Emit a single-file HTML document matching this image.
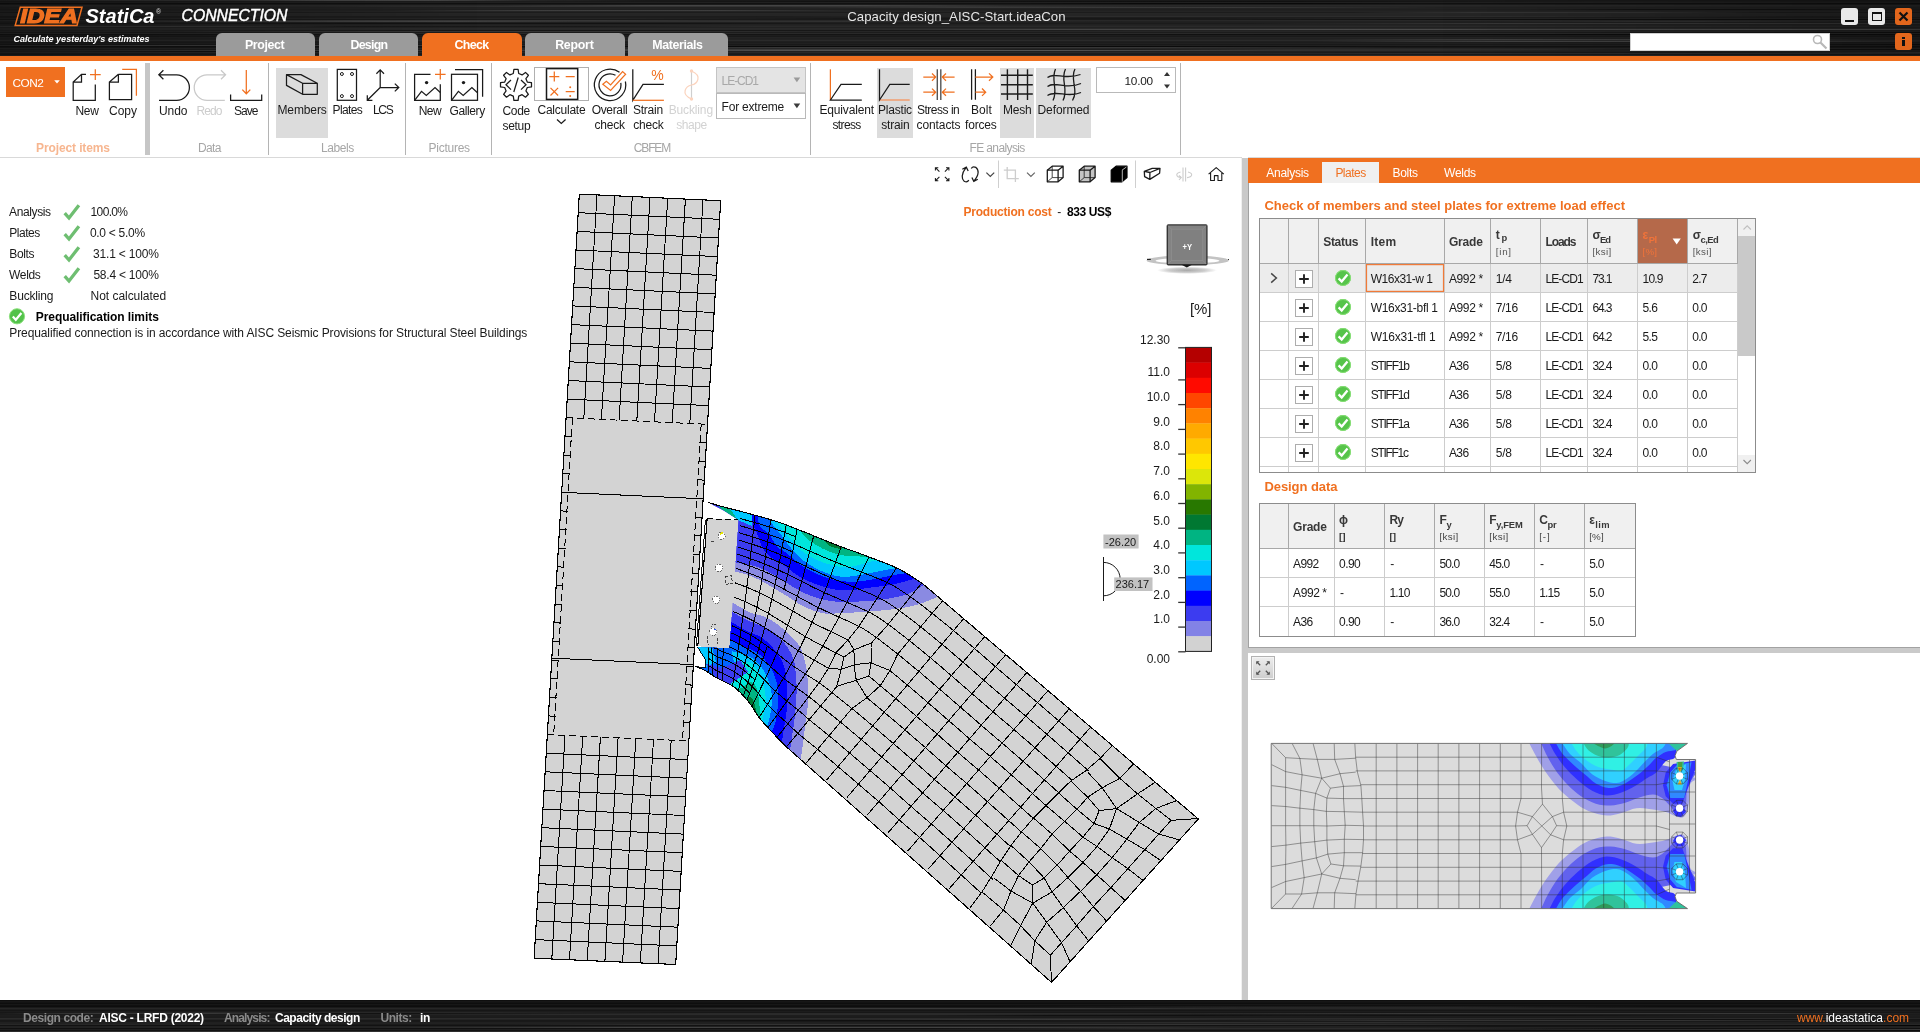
<!DOCTYPE html>
<html lang="en"><head><meta charset="utf-8"><title>IDEA StatiCa Connection</title>
<style>
html,body{margin:0;padding:0;}
body{width:1920px;height:1032px;overflow:hidden;background:#fff;position:relative;font-family:"Liberation Sans",sans-serif;}
.t{position:absolute;white-space:pre;line-height:20px;}
.b{position:absolute;box-sizing:border-box;}
svg{position:absolute;overflow:visible;}
</style></head>
<body>
<div id="app" style="position:absolute;left:0;top:0;width:1920px;height:1032px;will-change:transform;">
<div class="b" style="left:0;top:0;width:1920px;height:56px;background:linear-gradient(180deg,rgb(25,25,25) 0px,rgb(25,25,25) 1px,rgb(28,28,28) 1px,rgb(28,28,28) 2px,rgb(32,32,32) 2px,rgb(32,32,32) 3px,rgb(17,17,17) 3px,rgb(17,17,17) 4px,rgb(27,27,27) 4px,rgb(27,27,27) 5px,rgb(41,41,41) 5px,rgb(41,41,41) 6px,rgb(37,37,37) 6px,rgb(37,37,37) 7px,rgb(33,33,33) 7px,rgb(33,33,33) 8px,rgb(34,34,34) 8px,rgb(34,34,34) 9px,rgb(31,31,31) 9px,rgb(31,31,31) 10px,rgb(33,33,33) 10px,rgb(33,33,33) 11px,rgb(36,36,36) 11px,rgb(36,36,36) 12px,rgb(28,28,28) 12px,rgb(28,28,28) 13px,rgb(38,38,38) 13px,rgb(38,38,38) 14px,rgb(37,37,37) 14px,rgb(37,37,37) 15px,rgb(37,37,37) 15px,rgb(37,37,37) 16px,rgb(28,28,28) 16px,rgb(28,28,28) 17px,rgb(29,29,29) 17px,rgb(29,29,29) 18px,rgb(36,36,36) 18px,rgb(36,36,36) 19px,rgb(25,25,25) 19px,rgb(25,25,25) 20px,rgb(40,40,40) 20px,rgb(40,40,40) 21px,rgb(33,33,33) 21px,rgb(33,33,33) 22px,rgb(31,31,31) 22px,rgb(31,31,31) 23px,rgb(27,27,27) 23px,rgb(27,27,27) 24px,rgb(33,33,33) 24px,rgb(33,33,33) 25px,rgb(36,36,36) 25px,rgb(36,36,36) 26px,rgb(41,41,41) 26px,rgb(41,41,41) 27px,rgb(33,33,33) 27px,rgb(33,33,33) 28px,rgb(41,41,41) 28px,rgb(41,41,41) 29px,rgb(40,40,40) 29px,rgb(40,40,40) 30px,rgb(34,34,34) 30px,rgb(34,34,34) 31px,rgb(38,38,38) 31px,rgb(38,38,38) 32px,rgb(28,28,28) 32px,rgb(28,28,28) 33px,rgb(41,41,41) 33px,rgb(41,41,41) 34px,rgb(20,20,20) 34px,rgb(20,20,20) 35px,rgb(29,29,29) 35px,rgb(29,29,29) 36px,rgb(25,25,25) 36px,rgb(25,25,25) 37px,rgb(35,35,35) 37px,rgb(35,35,35) 38px,rgb(32,32,32) 38px,rgb(32,32,32) 39px,rgb(34,34,34) 39px,rgb(34,34,34) 40px,rgb(42,42,42) 40px,rgb(42,42,42) 41px,rgb(31,31,31) 41px,rgb(31,31,31) 42px,rgb(28,28,28) 42px,rgb(28,28,28) 43px,rgb(32,32,32) 43px,rgb(32,32,32) 44px,rgb(25,25,25) 44px,rgb(25,25,25) 45px,rgb(32,32,32) 45px,rgb(32,32,32) 46px,rgb(18,18,18) 46px,rgb(18,18,18) 47px,rgb(25,25,25) 47px,rgb(25,25,25) 48px,rgb(38,38,38) 48px,rgb(38,38,38) 49px,rgb(30,30,30) 49px,rgb(30,30,30) 50px,rgb(34,34,34) 50px,rgb(34,34,34) 51px,rgb(32,32,32) 51px,rgb(32,32,32) 52px,rgb(40,40,40) 52px,rgb(40,40,40) 53px,rgb(29,29,29) 53px,rgb(29,29,29) 54px,rgb(26,26,26) 54px,rgb(26,26,26) 55px,rgb(41,41,41) 55px,rgb(41,41,41) 56px);"></div>
<div class="b" style="left:1319px;top:39px;width:561px;height:1px;background:linear-gradient(90deg,transparent,rgba(255,255,255,0.13) 30%,rgba(255,255,255,0.13) 70%,transparent);"></div><div class="b" style="left:1135px;top:53px;width:1057px;height:1px;background:linear-gradient(90deg,transparent,rgba(255,255,255,0.07) 30%,rgba(255,255,255,0.07) 70%,transparent);"></div><div class="b" style="left:1129px;top:49px;width:555px;height:1px;background:linear-gradient(90deg,transparent,rgba(255,255,255,0.07) 30%,rgba(255,255,255,0.07) 70%,transparent);"></div><div class="b" style="left:760px;top:7px;width:680px;height:1px;background:linear-gradient(90deg,transparent,rgba(255,255,255,0.10) 30%,rgba(255,255,255,0.10) 70%,transparent);"></div><div class="b" style="left:310px;top:6px;width:887px;height:1px;background:linear-gradient(90deg,transparent,rgba(255,255,255,0.07) 30%,rgba(255,255,255,0.07) 70%,transparent);"></div><div class="b" style="left:172px;top:26px;width:586px;height:1px;background:linear-gradient(90deg,transparent,rgba(0,0,0,0.41) 30%,rgba(0,0,0,0.41) 70%,transparent);"></div><div class="b" style="left:84px;top:51px;width:373px;height:1px;background:linear-gradient(90deg,transparent,rgba(0,0,0,0.41) 30%,rgba(0,0,0,0.41) 70%,transparent);"></div><div class="b" style="left:228px;top:0px;width:305px;height:1px;background:linear-gradient(90deg,transparent,rgba(255,255,255,0.10) 30%,rgba(255,255,255,0.10) 70%,transparent);"></div><div class="b" style="left:392px;top:10px;width:470px;height:1px;background:linear-gradient(90deg,transparent,rgba(255,255,255,0.13) 30%,rgba(255,255,255,0.13) 70%,transparent);"></div><div class="b" style="left:1081px;top:34px;width:994px;height:1px;background:linear-gradient(90deg,transparent,rgba(0,0,0,0.35) 30%,rgba(0,0,0,0.35) 70%,transparent);"></div><div class="b" style="left:1779px;top:44px;width:501px;height:1px;background:linear-gradient(90deg,transparent,rgba(0,0,0,0.41) 30%,rgba(0,0,0,0.41) 70%,transparent);"></div><div class="b" style="left:139px;top:23px;width:724px;height:1px;background:linear-gradient(90deg,transparent,rgba(0,0,0,0.35) 30%,rgba(0,0,0,0.35) 70%,transparent);"></div><div class="b" style="left:1474px;top:21px;width:608px;height:1px;background:linear-gradient(90deg,transparent,rgba(255,255,255,0.07) 30%,rgba(255,255,255,0.07) 70%,transparent);"></div><div class="b" style="left:-65px;top:45px;width:646px;height:1px;background:linear-gradient(90deg,transparent,rgba(255,255,255,0.13) 30%,rgba(255,255,255,0.13) 70%,transparent);"></div><div class="b" style="left:1226px;top:19px;width:792px;height:1px;background:linear-gradient(90deg,transparent,rgba(0,0,0,0.38) 30%,rgba(0,0,0,0.38) 70%,transparent);"></div><div class="b" style="left:160px;top:30px;width:1021px;height:1px;background:linear-gradient(90deg,transparent,rgba(0,0,0,0.32) 30%,rgba(0,0,0,0.32) 70%,transparent);"></div><div class="b" style="left:532px;top:1px;width:1067px;height:1px;background:linear-gradient(90deg,transparent,rgba(0,0,0,0.41) 30%,rgba(0,0,0,0.41) 70%,transparent);"></div><div class="b" style="left:549px;top:50px;width:728px;height:1px;background:linear-gradient(90deg,transparent,rgba(255,255,255,0.16) 30%,rgba(255,255,255,0.16) 70%,transparent);"></div><div class="b" style="left:-105px;top:0px;width:763px;height:1px;background:linear-gradient(90deg,transparent,rgba(255,255,255,0.10) 30%,rgba(255,255,255,0.10) 70%,transparent);"></div><div class="b" style="left:1347px;top:12px;width:421px;height:1px;background:linear-gradient(90deg,transparent,rgba(255,255,255,0.10) 30%,rgba(255,255,255,0.10) 70%,transparent);"></div><div class="b" style="left:849px;top:29px;width:652px;height:1px;background:linear-gradient(90deg,transparent,rgba(255,255,255,0.13) 30%,rgba(255,255,255,0.13) 70%,transparent);"></div><div class="b" style="left:747px;top:16px;width:1094px;height:1px;background:linear-gradient(90deg,transparent,rgba(255,255,255,0.07) 30%,rgba(255,255,255,0.07) 70%,transparent);"></div><div class="b" style="left:1560px;top:49px;width:676px;height:1px;background:linear-gradient(90deg,transparent,rgba(0,0,0,0.38) 30%,rgba(0,0,0,0.38) 70%,transparent);"></div><div class="b" style="left:497px;top:5px;width:513px;height:1px;background:linear-gradient(90deg,transparent,rgba(255,255,255,0.13) 30%,rgba(255,255,255,0.13) 70%,transparent);"></div><div class="b" style="left:1692px;top:21px;width:582px;height:1px;background:linear-gradient(90deg,transparent,rgba(0,0,0,0.32) 30%,rgba(0,0,0,0.32) 70%,transparent);"></div><div class="b" style="left:163px;top:20px;width:613px;height:1px;background:linear-gradient(90deg,transparent,rgba(255,255,255,0.07) 30%,rgba(255,255,255,0.07) 70%,transparent);"></div><div class="b" style="left:433px;top:46px;width:1005px;height:1px;background:linear-gradient(90deg,transparent,rgba(0,0,0,0.41) 30%,rgba(0,0,0,0.41) 70%,transparent);"></div><div class="b" style="left:1030px;top:3px;width:382px;height:1px;background:linear-gradient(90deg,transparent,rgba(0,0,0,0.41) 30%,rgba(0,0,0,0.41) 70%,transparent);"></div><div class="b" style="left:504px;top:47px;width:908px;height:1px;background:linear-gradient(90deg,transparent,rgba(255,255,255,0.13) 30%,rgba(255,255,255,0.13) 70%,transparent);"></div><div class="b" style="left:-86px;top:26px;width:449px;height:1px;background:linear-gradient(90deg,transparent,rgba(255,255,255,0.07) 30%,rgba(255,255,255,0.07) 70%,transparent);"></div><div class="b" style="left:67px;top:21px;width:512px;height:1px;background:linear-gradient(90deg,transparent,rgba(255,255,255,0.10) 30%,rgba(255,255,255,0.10) 70%,transparent);"></div><div class="b" style="left:18px;top:50px;width:723px;height:1px;background:linear-gradient(90deg,transparent,rgba(255,255,255,0.10) 30%,rgba(255,255,255,0.10) 70%,transparent);"></div><div class="b" style="left:1530px;top:9px;width:360px;height:1px;background:linear-gradient(90deg,transparent,rgba(0,0,0,0.41) 30%,rgba(0,0,0,0.41) 70%,transparent);"></div><div class="b" style="left:1545px;top:29px;width:935px;height:1px;background:linear-gradient(90deg,transparent,rgba(255,255,255,0.10) 30%,rgba(255,255,255,0.10) 70%,transparent);"></div><div class="b" style="left:1210px;top:29px;width:799px;height:1px;background:linear-gradient(90deg,transparent,rgba(255,255,255,0.13) 30%,rgba(255,255,255,0.13) 70%,transparent);"></div><div class="b" style="left:626px;top:18px;width:781px;height:1px;background:linear-gradient(90deg,transparent,rgba(0,0,0,0.35) 30%,rgba(0,0,0,0.35) 70%,transparent);"></div><div class="b" style="left:1765px;top:52px;width:844px;height:1px;background:linear-gradient(90deg,transparent,rgba(255,255,255,0.10) 30%,rgba(255,255,255,0.10) 70%,transparent);"></div><div class="b" style="left:168px;top:31px;width:646px;height:1px;background:linear-gradient(90deg,transparent,rgba(255,255,255,0.07) 30%,rgba(255,255,255,0.07) 70%,transparent);"></div><div class="b" style="left:1576px;top:32px;width:861px;height:1px;background:linear-gradient(90deg,transparent,rgba(0,0,0,0.38) 30%,rgba(0,0,0,0.38) 70%,transparent);"></div><div class="b" style="left:528px;top:50px;width:1093px;height:1px;background:linear-gradient(90deg,transparent,rgba(255,255,255,0.07) 30%,rgba(255,255,255,0.07) 70%,transparent);"></div><div class="b" style="left:1242px;top:23px;width:872px;height:1px;background:linear-gradient(90deg,transparent,rgba(255,255,255,0.13) 30%,rgba(255,255,255,0.13) 70%,transparent);"></div><div class="b" style="left:1808px;top:16px;width:1088px;height:1px;background:linear-gradient(90deg,transparent,rgba(255,255,255,0.13) 30%,rgba(255,255,255,0.13) 70%,transparent);"></div><div class="b" style="left:165px;top:21px;width:965px;height:1px;background:linear-gradient(90deg,transparent,rgba(255,255,255,0.07) 30%,rgba(255,255,255,0.07) 70%,transparent);"></div><div class="b" style="left:467px;top:49px;width:556px;height:1px;background:linear-gradient(90deg,transparent,rgba(255,255,255,0.13) 30%,rgba(255,255,255,0.13) 70%,transparent);"></div><div class="b" style="left:1125px;top:52px;width:812px;height:1px;background:linear-gradient(90deg,transparent,rgba(0,0,0,0.38) 30%,rgba(0,0,0,0.38) 70%,transparent);"></div><div class="b" style="left:1311px;top:41px;width:653px;height:1px;background:linear-gradient(90deg,transparent,rgba(255,255,255,0.16) 30%,rgba(255,255,255,0.16) 70%,transparent);"></div>
<div class="b" style="left:0;top:0;width:1920px;height:56px;background:linear-gradient(90deg,rgba(0,0,0,.3),rgba(0,0,0,0) 25%,rgba(0,0,0,0) 75%,rgba(0,0,0,.3));"></div>
<div class="b" style="left:0px;top:56px;width:1920px;height:5px;background:#f07020;"></div>
<svg style="left:0;top:0" width="300" height="56" viewBox="0 0 300 56">
<path d="M20.3 7.2 H82 L77 25.4 H15.2 Z" fill="none" stroke="#f07020" stroke-width="1.5"/>
<text x="20.3" y="23.2" font-family="Liberation Sans, sans-serif" font-size="19.6" font-weight="700" font-style="italic" fill="#f07020" stroke="#f07020" stroke-width="1.2" textLength="57.5" lengthAdjust="spacingAndGlyphs">IDEA</text>
<text x="85.5" y="23.4" font-family="Liberation Sans, sans-serif" font-size="21" font-weight="700" font-style="italic" fill="#fff" textLength="69" lengthAdjust="spacingAndGlyphs">StatiCa</text>
<text x="156" y="13.5" font-family="Liberation Sans, sans-serif" font-size="7" fill="#ddd">®</text>
<text x="181.5" y="21.4" font-family="Liberation Sans, sans-serif" font-size="17.2" font-weight="400" font-style="italic" fill="#fff" stroke="#fff" stroke-width="0.45" textLength="106" lengthAdjust="spacingAndGlyphs">CONNECTION</text>
<text x="13.5" y="41.8" font-family="Liberation Sans, sans-serif" font-size="9.6" font-weight="700" font-style="italic" fill="#fff" textLength="136" lengthAdjust="spacingAndGlyphs">Calculate yesterday's estimates</text>
</svg>
<div class="b" style="left:215.5px;top:33px;width:99.5px;height:23px;background:#9b9b9b;border-radius:6px 6px 0 0;"></div>
<span class="t" style="left:245.00px;top:35px;font-size:12.4px;color:#fff;font-weight:700;letter-spacing:-0.402px;">Project</span>
<div class="b" style="left:318.5px;top:33px;width:99.5px;height:23px;background:#9b9b9b;border-radius:6px 6px 0 0;"></div>
<span class="t" style="left:350.40px;top:35px;font-size:12.4px;color:#fff;font-weight:700;letter-spacing:-0.711px;">Design</span>
<div class="b" style="left:422px;top:33px;width:99.5px;height:23px;background:#f07020;border-radius:6px 6px 0 0;"></div>
<span class="t" style="left:454.50px;top:35px;font-size:12.4px;color:#fff;font-weight:700;letter-spacing:-0.645px;">Check</span>
<div class="b" style="left:525px;top:33px;width:99.5px;height:23px;background:#9b9b9b;border-radius:6px 6px 0 0;"></div>
<span class="t" style="left:555.20px;top:35px;font-size:12.4px;color:#fff;font-weight:700;letter-spacing:-0.261px;">Report</span>
<div class="b" style="left:628px;top:33px;width:99.5px;height:23px;background:#9b9b9b;border-radius:6px 6px 0 0;"></div>
<span class="t" style="left:652.20px;top:35px;font-size:12.4px;color:#fff;font-weight:700;letter-spacing:-0.369px;">Materials</span>
<span class="t" style="left:847.30px;top:7px;font-size:13.2px;color:#e6e6e6;letter-spacing:0.039px;">Capacity design_AISC-Start.ideaCon</span>
<div class="b" style="left:1841px;top:8px;width:17px;height:17px;background:#e9e9e9;border-radius:3px;"></div>
<div class="b" style="left:1845px;top:19.5px;width:9px;height:2px;background:#111;"></div>
<div class="b" style="left:1868px;top:8px;width:17px;height:17px;background:#e9e9e9;border-radius:3px;"></div>
<div class="b" style="left:1872px;top:12px;width:9.5px;height:9px;border:1.6px solid #111;border-top-width:2.4px;"></div>
<div class="b" style="left:1895px;top:8px;width:17px;height:17px;background:#e2661c;border-radius:3px;"></div>
<svg style="left:1895px;top:8px" width="17" height="17" viewBox="0 0 17 17"><path d="M4.5 4.5 L12.5 12.5 M12.5 4.5 L4.5 12.5" stroke="#111" stroke-width="2.2" fill="none"/></svg>
<div class="b" style="left:1630px;top:33px;width:200px;height:18px;background:#fff;border:1px solid #cfcfcf;"></div>
<svg style="left:1810px;top:33px" width="20" height="18" viewBox="0 0 20 18"><circle cx="7.5" cy="6.5" r="4" fill="none" stroke="#b8b8b8" stroke-width="1.6"/><path d="M10.5 9.5 L16.5 15.5" stroke="#b8b8b8" stroke-width="2.2"/></svg>
<div class="b" style="left:1895px;top:33px;width:17px;height:17px;background:#e2661c;border-radius:3px;"></div>
<div class="b" style="left:1902.3px;top:36.5px;width:2.4px;height:2.4px;background:#111;"></div>
<div class="b" style="left:1902.3px;top:40.3px;width:2.4px;height:6.2px;background:#111;"></div><div class="b" style="left:0px;top:157px;width:1242px;height:1px;background:#d9d9d9;"></div>
<div class="b" style="left:1248px;top:157px;width:672px;height:1px;background:#d9d9d9;"></div>
<div class="b" style="left:276px;top:68px;width:52px;height:70px;background:#dcdcdc;"></div>
<div class="b" style="left:877px;top:68px;width:36px;height:70px;background:#dcdcdc;"></div>
<div class="b" style="left:1000px;top:68px;width:34px;height:70px;background:#dcdcdc;"></div>
<div class="b" style="left:1036px;top:68px;width:55px;height:70px;background:#dcdcdc;"></div>
<div class="b" style="left:145px;top:63px;width:5px;height:92px;background:#c6c6c6;"></div>
<div class="b" style="left:268px;top:63px;width:1px;height:92px;background:#b4b4b4;"></div>
<div class="b" style="left:405px;top:63px;width:1px;height:92px;background:#b4b4b4;"></div>
<div class="b" style="left:491px;top:63px;width:1px;height:92px;background:#b4b4b4;"></div>
<div class="b" style="left:810px;top:63px;width:1px;height:92px;background:#b4b4b4;"></div>
<div class="b" style="left:1180px;top:63px;width:1px;height:92px;background:#b4b4b4;"></div>
<div class="b" style="left:6px;top:67px;width:59px;height:30px;background:#f07020;"></div>
<span class="t" style="left:12.60px;top:73px;font-size:11.8px;color:#fff;letter-spacing:-0.509px;">CON2</span>
<svg style="left:53px;top:79px" width="8" height="6" viewBox="0 0 8 6"><path d="M1.2 1.2 H6.8 L4 4.6 Z" fill="#fff"/></svg>
<span class="t" style="left:75.50px;top:101px;font-size:12px;color:#1a1a1a;letter-spacing:-0.326px;">New</span>
<span class="t" style="left:109.00px;top:101px;font-size:12px;color:#1a1a1a;letter-spacing:-0.004px;">Copy</span>
<span class="t" style="left:159.00px;top:101px;font-size:12px;color:#1a1a1a;letter-spacing:-0.054px;">Undo</span>
<span class="t" style="left:234.00px;top:101px;font-size:12px;color:#1a1a1a;letter-spacing:-0.96px;">Save</span>
<span class="t" style="left:277.50px;top:100px;font-size:12px;color:#1a1a1a;letter-spacing:-0.125px;">Members</span>
<span class="t" style="left:332.50px;top:100px;font-size:12px;color:#1a1a1a;letter-spacing:-0.611px;">Plates</span>
<span class="t" style="left:373.00px;top:100px;font-size:12px;color:#1a1a1a;letter-spacing:-1.337px;">LCS</span>
<span class="t" style="left:418.70px;top:101px;font-size:12px;color:#1a1a1a;letter-spacing:-0.486px;">New</span>
<span class="t" style="left:449.50px;top:101px;font-size:12px;color:#1a1a1a;letter-spacing:-0.387px;">Gallery</span>
<span class="t" style="left:502.50px;top:101px;font-size:12px;color:#1a1a1a;letter-spacing:-0.339px;">Code</span>
<span class="t" style="left:502.50px;top:116px;font-size:12px;color:#1a1a1a;letter-spacing:-0.302px;">setup</span>
<span class="t" style="left:537.50px;top:100px;font-size:12px;color:#1a1a1a;letter-spacing:-0.239px;">Calculate</span>
<span class="t" style="left:591.70px;top:100px;font-size:12px;color:#1a1a1a;letter-spacing:-0.341px;">Overall</span>
<span class="t" style="left:594.50px;top:115px;font-size:12px;color:#1a1a1a;letter-spacing:-0.191px;">check</span>
<span class="t" style="left:633.00px;top:100px;font-size:12px;color:#1a1a1a;letter-spacing:-0.247px;">Strain</span>
<span class="t" style="left:633.20px;top:115px;font-size:12px;color:#1a1a1a;letter-spacing:-0.191px;">check</span>
<span class="t" style="left:819.50px;top:100px;font-size:12px;color:#1a1a1a;letter-spacing:-0.163px;">Equivalent</span>
<span class="t" style="left:832.50px;top:115px;font-size:12px;color:#1a1a1a;letter-spacing:-0.639px;">stress</span>
<span class="t" style="left:878.00px;top:100px;font-size:12px;color:#1a1a1a;letter-spacing:-0.207px;">Plastic</span>
<span class="t" style="left:881.20px;top:115px;font-size:12px;color:#1a1a1a;letter-spacing:-0.19px;">strain</span>
<span class="t" style="left:917.00px;top:100px;font-size:12px;color:#1a1a1a;letter-spacing:-0.493px;">Stress in</span>
<span class="t" style="left:916.50px;top:115px;font-size:12px;color:#1a1a1a;letter-spacing:-0.094px;">contacts</span>
<span class="t" style="left:971.00px;top:100px;font-size:12px;color:#1a1a1a;letter-spacing:0.089px;">Bolt</span>
<span class="t" style="left:965.00px;top:115px;font-size:12px;color:#1a1a1a;letter-spacing:-0.18px;">forces</span>
<span class="t" style="left:1003.00px;top:100px;font-size:12px;color:#1a1a1a;letter-spacing:-0.241px;">Mesh</span>
<span class="t" style="left:1037.50px;top:100px;font-size:12px;color:#1a1a1a;letter-spacing:-0.092px;">Deformed</span>
<span class="t" style="left:196.50px;top:101px;font-size:12px;color:#cdcdcd;letter-spacing:-0.911px;">Redo</span>
<span class="t" style="left:668.70px;top:100px;font-size:12px;color:#d2d2d2;letter-spacing:-0.141px;">Buckling</span>
<span class="t" style="left:676.20px;top:115px;font-size:12px;color:#d2d2d2;letter-spacing:-0.423px;">shape</span>
<span class="t" style="left:36.00px;top:138px;font-size:12px;color:#f7b690;font-weight:700;letter-spacing:-0.11px;">Project items</span>
<span class="t" style="left:198.00px;top:138px;font-size:12px;color:#a6a6a6;letter-spacing:-0.674px;">Data</span>
<span class="t" style="left:321.00px;top:138px;font-size:12px;color:#a6a6a6;letter-spacing:-0.432px;">Labels</span>
<span class="t" style="left:428.50px;top:138px;font-size:12px;color:#a6a6a6;letter-spacing:-0.248px;">Pictures</span>
<span class="t" style="left:633.70px;top:138px;font-size:12px;color:#a6a6a6;letter-spacing:-1.111px;">CBFEM</span>
<span class="t" style="left:969.50px;top:138px;font-size:12px;color:#a6a6a6;letter-spacing:-0.622px;">FE analysis</span>
<div class="b" style="left:716px;top:67px;width:90px;height:26px;background:#e4e4e4;border:1px solid #c4c4c4;"></div>
<span class="t" style="left:721.60px;top:71px;font-size:12px;color:#a8a8a8;letter-spacing:-1.052px;">LE-CD1</span>
<svg style="left:793px;top:76.5px" width="8" height="6" viewBox="0 0 8 6"><path d="M0.6 0.6 H7.2 L3.9 5.2 Z" fill="#9a9a9a"/></svg>
<div class="b" style="left:716px;top:93px;width:90px;height:26px;background:#fff;border:1px solid #b9b9b9;"></div>
<span class="t" style="left:721.60px;top:97px;font-size:12px;color:#1a1a1a;letter-spacing:-0.208px;">For extreme</span>
<svg style="left:793px;top:102.7px" width="8" height="6" viewBox="0 0 8 6"><path d="M0.6 0.6 H7.2 L3.9 5.2 Z" fill="#3c3c3c"/></svg>
<div class="b" style="left:1096px;top:67px;width:80px;height:26px;background:#fff;border:1px solid #b9b9b9;"></div>
<span class="t" style="left:1124.50px;top:71px;font-size:11.8px;color:#1a1a1a;letter-spacing:-0.229px;">10.00</span>
<svg style="left:1163px;top:71px" width="8" height="19" viewBox="0 0 8 19"><path d="M1 5 H7 L4 1 Z M1 13.5 H7 L4 17.5 Z" fill="#333"/></svg>
<div class="b" style="left:534px;top:67px;width:55px;height:34px;border:1px solid #b0b0b0;"></div>
<svg style="left:0;top:0" width="1200" height="160" viewBox="0 0 1200 160"><path d="M86 74.3 H81.5 L73.2 82 V100.4 H95.3 V84.4 M73.2 82 H81.5 V74.3" stroke="#1a1a1a" fill="none" stroke-width="1.25"/>
<path d="M90 74.5 H100.7 M95.3 69.2 V80" stroke="#f07020" fill="none" stroke-width="1.25"/>
<path d="M118.4 74.3 H131.6 V99.6 H109.4 V82 L118.4 74.3 M109.4 82 H118.4 V74.3" stroke="#1a1a1a" fill="none" stroke-width="1.25"/>
<path d="M122.2 69.3 H136.4 V95.7" stroke="#f07020" fill="none" stroke-width="1.25"/>
<path d="M158.8 74.8 H176.6 A12.8 12.8 0 0 1 176.6 100.4 H159 M163.4 70.3 L158.8 74.8 L163.4 79.3" stroke="#1a1a1a" fill="none" stroke-width="1.25"/>
<path d="M225.6 74.8 H207 A12.8 12.8 0 0 0 207 100.4 H224.8 M221 70.3 L225.6 74.8 L221 79.3" stroke="#c9c9c9" fill="none" stroke-width="1.25"/>
<path d="M246.3 70 V93.6 M242.3 89.6 L246.3 93.8 L250.3 89.6" stroke="#f07020" fill="none" stroke-width="1.25"/>
<path d="M230.6 94.5 V100.4 H261.7 V94.5" stroke="#1a1a1a" fill="none" stroke-width="1.25"/>
<path d="M286.5 74.6 H300.9 L317.3 83.3 H302.6 Z M286.5 74.6 V85.4 L302.6 94.3 H317.3 V83.3 M302.6 83.3 V94.3" stroke="#1a1a1a" fill="none" stroke-width="1.25" stroke-linejoin="round"/>
<rect x="337.3" y="69.4" width="19.2" height="30.9" stroke="#1a1a1a" fill="none" stroke-width="1.25"/>
<circle cx="341.9" cy="74" r="1.5" stroke="#1a1a1a" fill="none" stroke-width="1"/>
<circle cx="352" cy="74" r="1.5" stroke="#1a1a1a" fill="none" stroke-width="1"/>
<circle cx="341.9" cy="96.1" r="1.5" stroke="#1a1a1a" fill="none" stroke-width="1"/>
<circle cx="352" cy="96.1" r="1.5" stroke="#1a1a1a" fill="none" stroke-width="1"/>
<path d="M380.2 69.8 V87.5 H398.8 M380.2 87.5 L367.3 100.3 M376.4 73.8 L380.2 69.8 L384 73.8 M394.8 83.6 L398.8 87.5 L394.8 91.4 M367.3 95.3 V100.3 H372.4" stroke="#1a1a1a" fill="none" stroke-width="1.25"/>
<path d="M430.5 74.3 H414.6 V100.3 H440.3 V84.2" stroke="#1a1a1a" fill="none" stroke-width="1.25"/><circle cx="426.6" cy="82.6" r="1.7" fill="#1a1a1a"/><path d="M414.6 100.3 L421.5 91.3 L426.3 95.5 L435.0 87.5 L440.3 92.5" stroke="#1a1a1a" fill="none" stroke-width="1.25"/>
<path d="M435 74.3 H445.6 M440.3 69 V79.6" stroke="#f07020" fill="none" stroke-width="1.25"/>
<rect x="451.5" y="74.3" width="26" height="26" stroke="#1a1a1a" fill="none" stroke-width="1.25"/><circle cx="463.5" cy="82.6" r="1.7" fill="#1a1a1a"/><path d="M451.5 100.3 L458.4 91.3 L463.2 95.5 L471.9 87.5 L477.2 92.5" stroke="#1a1a1a" fill="none" stroke-width="1.25"/>
<path d="M455 69.5 H482.6 V96.7" stroke="#1a1a1a" fill="none" stroke-width="1.25"/>
<path d="M513.3 73.5 L513.9 69.3 L518.1 69.3 L518.7 73.5 L522.1 74.9 L525.5 72.4 L528.4 75.3 L525.9 78.7 L527.3 82.1 L531.5 82.7 L531.5 86.9 L527.3 87.5 L525.9 90.9 L528.4 94.3 L525.5 97.2 L522.1 94.7 L518.7 96.1 L518.1 100.3 L513.9 100.3 L513.3 96.1 L509.9 94.7 L506.5 97.2 L503.6 94.3 L506.1 90.9 L504.7 87.5 L500.5 86.9 L500.5 82.7 L504.7 82.1 L506.1 78.7 L503.6 75.3 L506.5 72.4 L509.9 74.9 Z" stroke="#1a1a1a" fill="none" stroke-width="1.25" stroke-linejoin="round"/>
<path d="M511 80 L506 84.8 L511 89.6 M521 80 L526 84.8 L521 89.6 M518.2 77.5 L513.8 92" stroke="#1a1a1a" fill="none" stroke-width="1.25"/>
<rect x="546.5" y="68.6" width="31.2" height="30.8" stroke="#1a1a1a" fill="none" stroke-width="1.5"/>
<path d="M549.3 76.6 H559.3 M554.3 71.6 V81.6 M565.7 76.6 H574.7 M550.5 87.9 L558.1 95.5 M558.1 87.9 L550.5 95.5 M565.7 91.7 H574.7" stroke="#f07020" fill="none" stroke-width="1.25"/>
<circle cx="570.2" cy="87.3" r="1" fill="#f07020"/><circle cx="570.2" cy="96.1" r="1" fill="#f07020"/>
<path d="M557 119.5 L561.3 123.5 L565.6 119.5" stroke="#1a1a1a" fill="none" stroke-width="1.25"/>
<path d="M619.5 72.3 A15.7 15.7 0 1 0 625.4 81.5" stroke="#1a1a1a" fill="none" stroke-width="1.25"/>
<path d="M615.5 75.3 A11 11 0 1 0 620.8 82.8" stroke="#1a1a1a" fill="none" stroke-width="1.25"/>
<path d="M602.8 84.2 L606.4 81.2 L610.6 84.9 L622.6 71.6 L625.6 74.2 L610.6 90.4 Z" stroke="#f07020" fill="#fff" stroke-width="1.2" stroke-linejoin="miter"/>
<path d="M632.8 69.2 V100.3 L643 84.4 H663.9" stroke="#1a1a1a" fill="none" stroke-width="1.25"/>
<path d="M632.8 100.3 H663.9" stroke="#f07020" fill="none" stroke-width="1.25"/>
<text x="651.3" y="80" font-family="Liberation Sans, sans-serif" font-size="14" fill="#f07020">%</text>
<path d="M691.5 71 V99" stroke="#cfcfcf" fill="none" stroke-width="1.2"/>
<path d="M691.5 71 C703 76 697 84 691.5 85 C686 86 680 94 691.5 99" stroke="#fbd3bd" fill="none" stroke-width="1.2"/>
<circle cx="691.5" cy="71" r="1.7" fill="#fbd3bd"/><circle cx="691.5" cy="99" r="1.7" fill="#fbd3bd"/>
<path d="M830.4 69.3 V100" stroke="#f07020" fill="none" stroke-width="1.25"/>
<path d="M861.8 100 H830.4 L841 84.4 H861.8" stroke="#1a1a1a" fill="none" stroke-width="1.25"/>
<path d="M879.5 100 H909.7" stroke="#f29866" fill="none" stroke-width="1.4"/>
<path d="M879.5 69.3 V100 L889.8 84.4 H909.7" stroke="#1a1a1a" fill="none" stroke-width="1.25"/>
<path d="M937.3 69.3 V100 M940.8 69.3 V100" stroke="#555" fill="none" stroke-width="1.4"/>
<path d="M923.3 77.1 H935.7 M932 73.5 L935.7 77.1 L932 80.69999999999999 M954.6 77.1 H942.3 M946 73.5 L942.3 77.1 L946 80.69999999999999" stroke="#f07020" fill="none" stroke-width="1.25"/>
<path d="M923.3 92.2 H935.7 M932 88.60000000000001 L935.7 92.2 L932 95.8 M954.6 92.2 H942.3 M946 88.60000000000001 L942.3 92.2 L946 95.8" stroke="#f07020" fill="none" stroke-width="1.25"/>
<path d="M971.6 69.3 V99.8 M975.4 69.3 V99.8" stroke="#1a1a1a" fill="none" stroke-width="1.25"/>
<path d="M975.4 77.1 H992.8 M989 73.4 L992.8 77.1 L989 80.8 M975.4 92.2 H985.7 M982 88.5 L985.7 92.2 L982 95.9" stroke="#f07020" fill="none" stroke-width="1.25"/>
<path d="M1001 75.3 H1032.8 M1001 84.7 H1032.8 M1001 94 H1032.8 M1007.4 69.3 V100 M1017.7 69.3 V100 M1027.5 69.3 V100" stroke="#1a1a1a" fill="none" stroke-width="1.4"/>
<path d="M1047.5 77.5 C1055 71.5 1064 80.5 1080.5 74.5 M1047.5 86.5 C1056 80.5 1066 90.5 1081 83.5 M1047.5 95.5 C1056 89.5 1068 98.5 1081 92.5 M1055.5 69 C1050.5 80 1058.5 90 1053 100.5 M1065.5 69 C1060 80 1069 89 1063 100.5 M1075 69 C1069.5 79 1079 90 1072.5 100.5" stroke="#1a1a1a" fill="none" stroke-width="1.3"/></svg><div class="b" style="left:1242px;top:158px;width:6px;height:842px;background:#c9c9c9;"></div>
<div class="b" style="left:1241px;top:158px;width:1px;height:842px;background:#f0f0f0;"></div>
<span class="t" style="left:9.10px;top:202px;font-size:12px;color:#1a1a1a;letter-spacing:-0.385px;">Analysis</span>
<span class="t" style="left:90.60px;top:202px;font-size:12px;color:#1a1a1a;letter-spacing:-0.655px;">100.0%</span>
<span class="t" style="left:9.30px;top:223px;font-size:12px;color:#1a1a1a;letter-spacing:-0.484px;">Plates</span>
<span class="t" style="left:89.90px;top:223px;font-size:12px;color:#1a1a1a;letter-spacing:-0.276px;">0.0 &lt; 5.0%</span>
<span class="t" style="left:9.30px;top:244px;font-size:12px;color:#1a1a1a;letter-spacing:-0.353px;">Bolts</span>
<span class="t" style="left:93.00px;top:244px;font-size:12px;color:#1a1a1a;letter-spacing:-0.184px;">31.1 &lt; 100%</span>
<span class="t" style="left:9.10px;top:265px;font-size:12px;color:#1a1a1a;letter-spacing:-0.339px;">Welds</span>
<span class="t" style="left:93.40px;top:265px;font-size:12px;color:#1a1a1a;letter-spacing:-0.222px;">58.4 &lt; 100%</span>
<span class="t" style="left:9.30px;top:286px;font-size:12px;color:#1a1a1a;letter-spacing:-0.168px;">Buckling</span>
<span class="t" style="left:90.60px;top:286px;font-size:12px;color:#1a1a1a;letter-spacing:-0.041px;">Not calculated</span>
<svg style="left:0;top:0" width="100" height="340" viewBox="0 0 100 340"><path d="M64.7 213.2 L69 218 L78.9 205.2" stroke="#6ebe71" stroke-width="3.3" fill="none"/><path d="M64.7 234.2 L69 239 L78.9 226.2" stroke="#6ebe71" stroke-width="3.3" fill="none"/><path d="M64.7 255.2 L69 260 L78.9 247.2" stroke="#6ebe71" stroke-width="3.3" fill="none"/><path d="M64.7 276.2 L69 281 L78.9 268.2" stroke="#6ebe71" stroke-width="3.3" fill="none"/><circle cx="17" cy="316.3" r="7.6" fill="#52c24a"/><circle cx="17" cy="316.3" r="7.6" fill="none" stroke="#8ee07f" stroke-width="1"/><path d="M12.8 316.6 L15.8 319.8 L21.4 313" stroke="#fff" stroke-width="2.2" fill="none"/></svg>
<span class="t" style="left:35.80px;top:307px;font-size:12px;color:#000;font-weight:700;letter-spacing:-0.076px;">Prequalification limits</span>
<span class="t" style="left:9.30px;top:323px;font-size:12px;color:#1a1a1a;letter-spacing:-0.11px;">Prequalified connection is in accordance with AISC Seismic Provisions for Structural Steel Buildings</span>
<svg style="left:0;top:0" width="1242" height="200" viewBox="0 0 1242 200"><path d="M935.4 170.6 V167.7 H938.3 M935.4 167.7 L939.4 171.7 M946 167.7 H948.9 V170.6 M948.9 167.7 L944.9 171.7 M935.4 177.9 V180.8 H938.3 M935.4 180.8 L939.4 176.8 M946 180.8 H948.9 V177.9 M948.9 180.8 L944.9 176.8" stroke="#1a1a1a" fill="none" stroke-width="1.05"/><path d="M962.3 169.3 L966.3 167.2 L968.2 171 M966 167.6 C961 174 961.5 179 964.2 181.2 C966.5 182.5 968 181.5 968.8 180.2 M977.8 179.2 L973.8 181.3 L971.9 177.5 M974.1 180.9 C979.5 174.5 978.8 169.5 975.9 167.4 C973.6 166.2 972 167.2 971.3 168.5" stroke="#1a1a1a" fill="none" stroke-width="1.25"/><path d="M986.4 172.6 L990.3 176.5 L994.2 172.6" stroke="#444" fill="none" stroke-width="1.2"/><rect x="998" y="160.5" width="1" height="27.5" fill="#cfcfcf"/><path d="M1003.8 170.2 H1015.4 V182 M1007.2 166.9 V178.7 H1018.8" stroke="#cdcdcd" fill="none" stroke-width="1.3"/><path d="M1027 172.6 L1030.9 176.5 L1034.8 172.6" stroke="#666" fill="none" stroke-width="1.2"/><polygon points="1047.3,170.2 1058.1,170.2 1058.1,181.8 1047.3,181.8" fill="none" stroke="#1a1a1a" stroke-width="1.3" stroke-linejoin="round"/><path d="M1047.3 170.2 L1052.2 166.2 H1063.1 V177.6 L1058.1 181.8 M1058.1 170.2 L1063.1 166.2" stroke="#1a1a1a" stroke-width="1.3" fill="none" stroke-linejoin="round"/><path d="M1047.3 181.8 L1052.2 177.6 H1063.1 M1052.2 177.6 V166.2" stroke="#1a1a1a" stroke-width="0.8" fill="none"/><polygon points="1079.3,170.2 1084.2,166.2 1095.1,166.2 1095.1,177.6 1090.1,181.8 1079.3,181.8" fill="#c4c4c4"/><polygon points="1079.3,170.2 1090.1,170.2 1090.1,181.8 1079.3,181.8" fill="#c4c4c4"/><polygon points="1079.3,170.2 1090.1,170.2 1090.1,181.8 1079.3,181.8" fill="none" stroke="#1a1a1a" stroke-width="1.3" stroke-linejoin="round"/><path d="M1079.3 170.2 L1084.2 166.2 H1095.1 V177.6 L1090.1 181.8 M1090.1 170.2 L1095.1 166.2" stroke="#1a1a1a" stroke-width="1.3" fill="none" stroke-linejoin="round"/><path d="M1079.3 181.8 L1084.2 177.6 H1095.1 M1084.2 177.6 V166.2" stroke="#1a1a1a" stroke-width="0.8" fill="none"/><polygon points="1111.2,170.2 1116.1,166.2 1127.0,166.2 1127.0,177.6 1122.0,181.8 1111.2,181.8" fill="#000" stroke="#000" stroke-width="1.2" stroke-linejoin="round"/><path d="M1122.0 170.2 L1126.4 167.0 M1122.3 170.2 V181.8" stroke="#fff" stroke-width="0.7" fill="none"/><rect x="1135" y="160.5" width="1" height="27.5" fill="#cfcfcf"/><path d="M1144.3 171.4 L1152.2 168.3 H1160 L1159.6 173.2 L1149.8 179.4 L1144.6 176.6 Z M1144.3 171.4 L1149.9 172.5 L1160 168.3 M1149.9 172.5 L1149.8 179.4" stroke="#1a1a1a" fill="none" stroke-width="1.3" stroke-linejoin="round"/><path d="M1183 167.5 V181.5 M1185.6 167.5 V181.5 M1180.5 172 C1175 173.5 1176 177 1181 177.5 M1188 172 C1193.5 173.5 1192.5 177 1187 177.6 M1179 175.3 L1181.3 177.6 L1179 179.8" stroke="#cdcdcd" fill="none" stroke-width="1.1"/><path d="M1208.6 174.2 L1216.2 167.6 L1223.8 174.2 M1210.6 173 V180.5 H1214.4 V175.6 H1218 V180.5 H1221.8 V173" stroke="#1a1a1a" fill="none" stroke-width="1.1" stroke-linejoin="round"/></svg>
<span class="t" style="left:963.50px;top:202px;font-size:12px;color:#f07020;font-weight:700;letter-spacing:-0.224px;">Production cost</span>
<span class="t" style="left:1057.30px;top:202px;font-size:12px;color:#1a1a1a;">-</span>
<span class="t" style="left:1066.90px;top:202px;font-size:12px;color:#000;font-weight:700;letter-spacing:-0.37px;">833 US$</span>
<svg style="left:0;top:0" width="1242" height="300" viewBox="0 0 1242 300"><defs><radialGradient id="shd" cx="50%" cy="50%" r="50%"><stop offset="0" stop-color="#8a8a8a" stop-opacity=".75"/><stop offset="0.6" stop-color="#9a9a9a" stop-opacity=".5"/><stop offset="1" stop-color="#9a9a9a" stop-opacity="0"/></radialGradient></defs><ellipse cx="1187" cy="270.3" rx="30" ry="3.6" fill="url(#shd)"/><path d="M1146.5 260.4 a41.2 4.9 0 1 0 82.4 0 a41.2 4.9 0 1 0 -82.4 0 Z M1155.5 260.7 a32 2.7 0 1 1 64 0 a32 2.7 0 1 1 -64 0 Z" fill="#c3c3c3" fill-rule="evenodd"/><path d="M1147 259.4 H1150.8" stroke="#222" stroke-width="1.2"/><rect x="1228" y="259" width="1" height="1" fill="#333"/><rect x="1167.3" y="224.9" width="39.6" height="39.8" fill="#838383" stroke="#353535" stroke-width="1.4" rx="1"/><rect x="1171.5" y="229.2" width="31.2" height="31.2" fill="#808080" stroke="#8e8e8e" stroke-width="0.8"/><path d="M1168 225.6 l3.5 3.6 M1206.2 225.6 l-3.5 3.6 M1168 264 l3.5 -3.6 M1206.2 264 l-3.5 -3.6" stroke="#909090" stroke-width="0.8"/><path d="M1181.5 264.8 H1192 L1186.8 267.4 Z" fill="#1a1a1a"/><text x="1182.6" y="249.6" font-family="Liberation Sans, sans-serif" font-size="9" font-weight="700" fill="#fff" textLength="9.6" lengthAdjust="spacingAndGlyphs">+Y</text></svg>
<span class="t" style="left:1190.00px;top:299px;font-size:15px;color:#1a1a1a;letter-spacing:-0.115px;">[%]</span>
<svg style="left:0;top:0" width="1242" height="700" viewBox="0 0 1242 700"><rect x="1185.5" y="347.40" width="26" height="15.50" fill="#b40000"/><rect x="1185.5" y="362.60" width="26" height="15.50" fill="#dc0000"/><rect x="1185.5" y="377.80" width="26" height="15.50" fill="#ff0a00"/><rect x="1185.5" y="393.00" width="26" height="15.50" fill="#ff4600"/><rect x="1185.5" y="408.20" width="26" height="15.50" fill="#ff8200"/><rect x="1185.5" y="423.40" width="26" height="15.50" fill="#ffaa00"/><rect x="1185.5" y="438.60" width="26" height="15.50" fill="#ffc800"/><rect x="1185.5" y="453.80" width="26" height="15.50" fill="#ffe600"/><rect x="1185.5" y="469.00" width="26" height="15.50" fill="#dce60a"/><rect x="1185.5" y="484.20" width="26" height="15.50" fill="#82b400"/><rect x="1185.5" y="499.40" width="26" height="15.50" fill="#287800"/><rect x="1185.5" y="514.60" width="26" height="15.50" fill="#007832"/><rect x="1185.5" y="529.80" width="26" height="15.50" fill="#00b482"/><rect x="1185.5" y="545.00" width="26" height="15.50" fill="#00e6dc"/><rect x="1185.5" y="560.20" width="26" height="15.50" fill="#00c8ff"/><rect x="1185.5" y="575.40" width="26" height="15.50" fill="#0064ff"/><rect x="1185.5" y="590.60" width="26" height="15.50" fill="#0000ff"/><rect x="1185.5" y="605.80" width="26" height="15.50" fill="#3c3cf0"/><rect x="1185.5" y="621.00" width="26" height="15.50" fill="#8282e6"/><rect x="1185.5" y="636.20" width="26" height="15.50" fill="#d2d2d2"/><rect x="1185.5" y="347.4" width="26" height="304.0" fill="none" stroke="#222" stroke-width="1"/><path d="M1178.2 347.8 H1185.5" stroke="#333" stroke-width="1.3"/><text x="1170" y="344.1" text-anchor="end" font-family="Liberation Sans, sans-serif" font-size="12" fill="#1a1a1a">12.30</text><path d="M1178.2 379.9 H1185.5" stroke="#333" stroke-width="1.3"/><text x="1170" y="376.2" text-anchor="end" font-family="Liberation Sans, sans-serif" font-size="12" fill="#1a1a1a">11.0</text><path d="M1178.2 404.6 H1185.5" stroke="#333" stroke-width="1.3"/><text x="1170" y="400.9" text-anchor="end" font-family="Liberation Sans, sans-serif" font-size="12" fill="#1a1a1a">10.0</text><path d="M1178.2 429.4 H1185.5" stroke="#333" stroke-width="1.3"/><text x="1170" y="425.7" text-anchor="end" font-family="Liberation Sans, sans-serif" font-size="12" fill="#1a1a1a">9.0</text><path d="M1178.2 454.1 H1185.5" stroke="#333" stroke-width="1.3"/><text x="1170" y="450.4" text-anchor="end" font-family="Liberation Sans, sans-serif" font-size="12" fill="#1a1a1a">8.0</text><path d="M1178.2 478.8 H1185.5" stroke="#333" stroke-width="1.3"/><text x="1170" y="475.1" text-anchor="end" font-family="Liberation Sans, sans-serif" font-size="12" fill="#1a1a1a">7.0</text><path d="M1178.2 503.5 H1185.5" stroke="#333" stroke-width="1.3"/><text x="1170" y="499.8" text-anchor="end" font-family="Liberation Sans, sans-serif" font-size="12" fill="#1a1a1a">6.0</text><path d="M1178.2 528.2 H1185.5" stroke="#333" stroke-width="1.3"/><text x="1170" y="524.5" text-anchor="end" font-family="Liberation Sans, sans-serif" font-size="12" fill="#1a1a1a">5.0</text><path d="M1178.2 552.9 H1185.5" stroke="#333" stroke-width="1.3"/><text x="1170" y="549.2" text-anchor="end" font-family="Liberation Sans, sans-serif" font-size="12" fill="#1a1a1a">4.0</text><path d="M1178.2 577.7 H1185.5" stroke="#333" stroke-width="1.3"/><text x="1170" y="574.0" text-anchor="end" font-family="Liberation Sans, sans-serif" font-size="12" fill="#1a1a1a">3.0</text><path d="M1178.2 602.4 H1185.5" stroke="#333" stroke-width="1.3"/><text x="1170" y="598.7" text-anchor="end" font-family="Liberation Sans, sans-serif" font-size="12" fill="#1a1a1a">2.0</text><path d="M1178.2 627.1 H1185.5" stroke="#333" stroke-width="1.3"/><text x="1170" y="623.4" text-anchor="end" font-family="Liberation Sans, sans-serif" font-size="12" fill="#1a1a1a">1.0</text><path d="M1178.2 651.8 H1185.5" stroke="#333" stroke-width="1.3"/><text x="1170" y="662.9" text-anchor="end" font-family="Liberation Sans, sans-serif" font-size="12" fill="#1a1a1a">0.00</text><path d="M1103.5 557 V601 M1103.5 562.4 A16.7 16.7 0 0 1 1103.5 595.8" stroke="#1a1a1a" fill="none" stroke-width="1"/><rect x="1103.4" y="534.5" width="35.2" height="14" fill="#c2c2c2"/><rect x="1114.2" y="577.4" width="38.3" height="13.6" fill="#c2c2c2"/><text x="1105" y="545.6" font-family="Liberation Sans, sans-serif" font-size="11" fill="#1a1a1a">-26.20</text><text x="1115.6" y="588.3" font-family="Liberation Sans, sans-serif" font-size="11" fill="#1a1a1a">236.17</text></svg><svg style="left:0;top:0" width="1242" height="1000" viewBox="0 0 1242 1000" shape-rendering="crispEdges"><defs><clipPath id="bclip"><polygon points="708.2,502.4 709.8,502.9 711.8,503.5 714.4,504.3 717.6,505.3 721.3,506.3 725.7,507.5 730.9,508.8 736.6,510.3 742.4,511.8 748.1,513.3 753.8,514.9 759.6,516.5 765.6,518.1 771.4,519.9 777.2,521.7 782.8,523.6 788.2,525.7 793.6,527.8 799.1,530.0 804.8,532.2 810.7,534.5 816.6,537.0 822.7,539.5 829.0,542.0 835.3,544.5 841.9,547.0 848.6,549.5 855.5,551.9 862.2,554.4 868.8,556.9 875.2,559.3 881.5,561.7 887.7,564.1 893.7,566.6 899.3,569.2 904.9,572.3 910.5,575.7 915.7,579.2 920.1,582.1 923.3,584.2 1198.3,819.0 1051.5,982.4 787.1,747.5 785.0,745.3 781.9,742.3 778.4,738.7 774.9,735.1 771.8,731.8 769.1,728.9 766.5,726.1 764.0,723.3 761.6,720.6 759.4,717.8 757.4,715.0 755.5,712.2 753.8,709.3 752.0,706.6 750.1,703.9 748.0,701.2 745.8,698.6 743.6,696.0 741.4,693.6 739.3,691.5 737.4,689.8 735.7,688.3 734.0,687.0 732.1,685.8 730.0,684.5 727.4,683.1 724.6,681.7 721.6,680.3 718.7,678.9 716.0,677.5 713.6,676.1 711.4,674.6 709.3,673.1 707.3,671.7 705.2,670.5 703.0,669.4 700.6,668.5 698.4,667.6 696.5,666.9 695.1,666.4 705.0,668.0 705.3,659.5 697.5,647.0 729.3,648.3 738.4,520.0 724.0,510.8"/></clipPath></defs><polygon points="708.2,502.4 709.8,502.9 711.8,503.5 714.4,504.3 717.6,505.3 721.3,506.3 725.7,507.5 730.9,508.8 736.6,510.3 742.4,511.8 748.1,513.3 753.8,514.9 759.6,516.5 765.6,518.1 771.4,519.9 777.2,521.7 782.8,523.6 788.2,525.7 793.6,527.8 799.1,530.0 804.8,532.2 810.7,534.5 816.6,537.0 822.7,539.5 829.0,542.0 835.3,544.5 841.9,547.0 848.6,549.5 855.5,551.9 862.2,554.4 868.8,556.9 875.2,559.3 881.5,561.7 887.7,564.1 893.7,566.6 899.3,569.2 904.9,572.3 910.5,575.7 915.7,579.2 920.1,582.1 923.3,584.2 1198.3,819.0 1051.5,982.4 787.1,747.5 785.0,745.3 781.9,742.3 778.4,738.7 774.9,735.1 771.8,731.8 769.1,728.9 766.5,726.1 764.0,723.3 761.6,720.6 759.4,717.8 757.4,715.0 755.5,712.2 753.8,709.3 752.0,706.6 750.1,703.9 748.0,701.2 745.8,698.6 743.6,696.0 741.4,693.6 739.3,691.5 737.4,689.8 735.7,688.3 734.0,687.0 732.1,685.8 730.0,684.5 727.4,683.1 724.6,681.7 721.6,680.3 718.7,678.9 716.0,677.5 713.6,676.1 711.4,674.6 709.3,673.1 707.3,671.7 705.2,670.5 703.0,669.4 700.6,668.5 698.4,667.6 696.5,666.9 695.1,666.4 705.0,668.0 705.3,659.5 697.5,647.0 729.3,648.3 738.4,520.0 724.0,510.8" fill="#d3d3d3"/><g clip-path="url(#bclip)"><polygon points="730.0,568.0 730.7,568.6 731.7,569.5 733.1,570.5 735.1,571.4 737.8,572.2 741.0,573.0 744.6,573.9 748.1,575.0 751.6,576.4 755.3,578.0 759.0,579.7 762.7,581.6 766.3,583.6 770.0,585.8 773.6,588.1 777.2,590.3 780.9,592.5 784.6,594.7 788.3,596.9 791.7,599.0 794.7,600.9 797.4,602.8 800.1,604.6 803.4,606.3 807.4,608.1 811.9,610.0 816.5,611.6 820.8,612.8 824.3,613.4 827.3,613.7 830.7,613.6 835.3,613.5 841.5,613.3 848.9,612.9 856.8,612.3 864.4,611.8 871.8,611.3 879.3,610.7 886.6,610.0 893.5,609.2 899.7,608.3 905.5,607.4 911.0,606.3 916.7,604.8 922.8,602.8 929.2,600.5 935.1,597.9 940.0,595.4 943.7,592.6 946.5,589.6 948.5,586.9 950.0,585.0 960.0,525.0 700.0,440.0 722.0,568.0" fill="#8a8ae2"/><polygon points="730.0,561.0 730.9,561.3 732.1,561.6 733.9,562.1 736.5,562.7 740.5,563.4 745.5,564.2 750.7,565.2 755.4,566.3 759.3,567.7 762.9,569.2 766.4,570.9 769.9,572.8 773.5,574.8 777.2,577.1 780.9,579.4 784.5,581.6 788.1,583.8 791.8,586.1 795.4,588.3 799.0,590.3 802.6,592.1 806.2,593.9 809.9,595.4 813.5,596.8 817.1,598.0 820.8,599.0 824.5,599.8 828.1,600.5 831.6,601.1 834.9,601.5 838.5,601.8 842.6,601.9 847.5,601.9 853.0,601.8 858.8,601.5 864.4,601.2 869.9,600.8 875.3,600.4 880.7,599.8 886.2,599.0 891.8,598.0 897.5,596.9 903.0,595.5 908.0,593.9 912.6,591.9 916.9,589.5 920.7,587.0 924.0,584.5 926.8,581.9 929.0,579.2 930.8,576.7 932.0,575.0 942.0,515.0 700.0,440.0 722.0,561.0" fill="#3c3cf0"/><polygon points="749.0,508.0 749.3,509.7 749.8,512.3 750.4,515.0 751.0,517.6 751.6,519.8 752.4,521.9 753.1,524.0 754.0,526.3 755.0,528.7 756.1,531.2 757.2,533.8 758.3,536.5 759.3,539.4 760.2,542.3 761.3,545.3 762.7,548.1 764.5,550.7 766.5,553.1 768.8,555.4 771.4,557.6 774.4,559.7 777.9,561.7 781.3,563.6 784.5,565.6 787.2,567.6 789.7,569.7 792.1,571.7 794.7,573.6 797.4,575.3 800.2,577.0 803.2,578.6 806.3,580.1 809.7,581.6 813.4,583.2 817.1,584.6 820.8,585.9 824.4,587.0 828.0,588.1 831.7,588.9 835.3,589.6 838.8,590.1 842.1,590.4 845.7,590.4 849.9,590.3 854.9,589.8 860.4,589.1 866.1,588.2 871.7,587.4 877.2,586.7 882.8,586.0 888.1,585.3 893.0,584.5 897.4,583.5 901.3,582.5 904.9,581.4 908.0,580.5 910.5,579.9 912.4,579.5 914.1,579.0 916.0,578.0 918.4,576.2 921.0,573.8 923.4,571.6 925.0,570.0 935.0,510.0 700.0,440.0 741.0,508.0" fill="#0000ff"/><polygon points="757.0,512.0 757.4,514.7 757.9,518.7 758.6,522.9 759.8,526.3 761.6,528.5 763.8,530.0 766.2,531.5 768.5,533.6 770.7,536.6 772.9,540.2 775.0,543.8 777.2,546.7 779.3,548.6 781.5,549.9 783.6,551.0 785.9,552.5 788.3,554.5 790.9,556.8 793.5,559.1 796.1,561.2 798.6,563.2 801.1,565.0 803.7,566.8 806.3,568.5 809.0,570.1 811.8,571.5 814.8,572.9 817.9,574.3 821.3,575.7 825.0,577.1 828.7,578.3 832.4,579.4 836.0,580.2 839.5,580.9 843.2,581.3 847.0,581.6 851.1,581.7 855.4,581.6 859.9,581.3 864.4,580.8 869.1,580.1 874.1,579.1 878.9,578.1 883.3,577.2 887.2,576.4 890.8,575.7 894.0,575.1 897.0,574.5 899.6,574.2 901.9,574.0 903.9,573.7 906.0,573.0 908.3,571.5 910.6,569.4 912.6,567.4 914.0,566.0 924.0,506.0 700.0,440.0 749.0,512.0" fill="#0064ff"/><polygon points="768.0,514.0 768.5,515.5 769.2,517.7 770.1,520.2 771.4,522.7 773.2,525.3 775.4,528.0 777.8,530.8 780.1,533.6 782.3,536.5 784.4,539.4 786.6,542.4 788.8,545.2 791.0,547.9 793.2,550.6 795.4,553.1 797.6,555.4 799.6,557.4 801.6,559.2 803.7,560.9 806.3,562.7 809.5,564.7 813.2,566.8 817.0,568.9 820.8,570.7 824.4,572.3 828.0,573.7 831.7,574.9 835.3,575.8 838.8,576.4 842.1,576.7 845.7,576.7 849.9,576.5 855.0,575.9 860.7,574.9 866.5,573.8 871.7,572.8 876.3,571.9 880.6,571.0 884.5,570.2 888.0,569.5 891.0,569.3 893.6,569.3 895.9,569.2 898.0,568.5 900.1,566.7 902.1,564.2 903.8,561.7 905.0,560.0 915.0,500.0 700.0,440.0 760.0,514.0" fill="#00c8ff"/><polygon points="774.0,515.0 774.4,516.3 775.1,518.2 775.9,520.4 777.2,522.7 779.0,525.2 781.2,528.0 783.6,530.8 785.9,533.6 788.1,536.3 790.4,538.9 792.6,541.5 794.7,543.8 796.5,545.8 798.1,547.6 799.8,549.3 801.9,551.0 804.4,552.9 807.2,554.7 810.3,556.6 813.5,558.3 816.9,559.9 820.6,561.5 824.4,562.9 828.1,564.1 831.7,565.1 835.4,566.0 839.0,566.6 842.6,567.0 846.2,567.0 849.8,566.8 853.5,566.3 857.1,565.6 860.9,564.6 864.9,563.3 868.6,562.1 871.7,561.2 874.0,561.1 875.8,561.4 877.4,561.5 879.0,560.8 880.9,558.6 883.0,555.4 884.7,552.2 886.0,550.0 896.0,490.0 700.0,440.0 766.0,515.0" fill="#00e6dc"/><polygon points="797.0,524.0 797.6,525.2 798.4,526.9 799.4,528.8 800.5,530.7 801.7,532.5 803.0,534.3 804.5,536.2 806.3,538.0 808.5,539.8 811.0,541.7 813.7,543.5 816.5,545.2 819.2,546.8 822.0,548.3 825.0,549.7 828.1,551.0 831.5,552.3 835.2,553.5 838.9,554.6 842.6,555.4 846.3,555.8 850.0,556.0 853.7,556.0 857.1,556.1 860.4,556.5 863.5,557.1 866.4,557.4 868.8,556.9 870.7,555.1 872.1,552.5 873.2,549.8 874.0,548.0 884.0,488.0 700.0,440.0 789.0,524.0" fill="#00b482"/><polygon points="822.0,535.0 822.6,536.5 823.5,538.7 824.6,541.1 826.0,543.0 827.7,544.5 829.8,545.7 831.9,546.7 834.0,547.5 836.0,548.1 838.1,548.6 840.1,548.7 842.0,548.5 843.8,547.7 845.5,546.3 847.0,544.9 848.0,544.0 858.0,484.0 700.0,440.0 814.0,535.0" fill="#007832"/><polygon points="726.0,600.0 727.0,600.4 728.5,601.0 730.5,601.8 733.1,603.1 736.7,605.1 741.1,607.7 745.7,610.3 750.1,612.4 754.2,613.8 758.1,614.9 762.0,615.8 765.6,617.1 768.9,618.7 772.0,620.6 775.0,622.6 778.0,624.8 781.2,627.3 784.4,630.1 787.5,632.9 790.4,635.7 793.0,638.3 795.5,640.8 797.7,643.5 799.7,646.5 801.4,650.0 802.9,654.0 804.1,658.0 805.2,662.0 806.0,665.9 806.6,669.8 807.1,673.6 807.5,677.5 807.8,681.4 808.1,685.2 808.2,689.1 808.3,693.0 808.2,696.9 808.1,700.8 807.8,704.6 807.5,708.5 807.0,712.4 806.4,716.2 805.8,720.1 805.2,724.0 804.8,727.9 804.4,731.8 804.0,735.6 803.6,739.5 803.1,743.5 802.5,747.5 801.9,751.4 801.3,755.0 800.7,758.3 800.0,761.5 799.4,764.1 799.0,766.0 769.0,806.0 660.0,760.0 660.0,600.0" fill="#8a8ae2"/><polygon points="724.0,608.0 725.2,608.5 726.8,609.3 728.9,610.3 731.5,611.6 734.8,613.5 738.8,615.7 742.9,618.1 747.0,620.2 750.9,621.9 754.9,623.4 758.8,624.9 762.5,626.4 765.9,628.0 769.0,629.5 772.0,631.2 774.9,633.3 777.8,635.8 780.6,638.7 783.3,641.8 785.8,645.0 788.1,648.3 790.2,651.7 792.0,655.3 793.5,658.9 794.5,662.7 795.1,666.5 795.5,670.5 795.9,674.4 796.2,678.3 796.4,682.1 796.6,686.0 796.6,689.9 796.5,693.8 796.4,697.6 796.2,701.5 795.9,705.4 795.6,709.3 795.2,713.1 794.8,717.0 794.3,720.9 793.8,724.9 793.1,728.9 792.5,732.8 792.0,736.4 791.6,739.5 791.2,742.1 790.8,744.7 790.4,747.3 789.8,750.2 789.1,753.3 788.4,756.1 788.0,758.0 758.0,798.0 660.0,760.0 660.0,608.0" fill="#3c3cf0"/><polygon points="723.0,618.0 724.2,618.5 725.8,619.3 728.0,620.3 730.7,621.7 734.3,623.7 738.6,626.2 743.0,628.8 747.0,631.0 750.4,632.6 753.6,633.8 756.6,635.0 759.4,636.4 761.9,637.9 764.2,639.6 766.4,641.3 768.7,643.4 771.1,645.8 773.5,648.5 775.9,651.4 778.0,654.3 779.9,657.3 781.5,660.3 783.0,663.5 784.2,666.7 785.1,670.0 785.7,673.5 786.2,677.0 786.6,680.6 786.9,684.4 787.1,688.2 787.3,692.2 787.3,696.1 787.3,700.0 787.1,703.9 786.9,707.7 786.6,711.6 786.1,715.5 785.5,719.4 784.8,723.3 784.2,727.1 783.6,730.8 783.1,734.4 782.5,737.9 781.9,741.1 781.1,744.3 780.3,747.4 779.5,750.1 779.0,752.0 749.0,792.0 660.0,760.0 660.0,618.0" fill="#0000ff"/><polygon points="722.0,635.0 723.3,635.6 725.1,636.4 727.4,637.5 730.0,638.8 733.1,640.5 736.8,642.6 740.5,644.7 743.9,646.5 746.9,647.8 749.6,648.9 752.3,649.9 754.8,651.2 757.3,652.8 759.6,654.7 761.9,656.7 764.1,658.9 766.2,661.4 768.2,664.1 770.1,666.9 771.8,669.8 773.3,672.8 774.5,675.8 775.6,679.0 776.5,682.2 777.2,685.5 777.6,689.0 777.9,692.5 778.0,696.1 778.0,699.9 777.8,703.9 777.6,707.9 777.2,711.6 776.7,715.0 776.2,718.3 775.6,721.3 774.9,724.0 774.2,726.2 773.4,728.0 772.6,729.8 771.8,731.8 770.8,734.4 769.7,737.4 768.7,740.1 768.0,742.0 738.0,782.0 660.0,760.0 660.0,635.0" fill="#0064ff"/><polygon points="722.0,650.0 723.6,650.2 726.0,650.4 728.7,650.7 731.5,651.2 734.5,651.8 737.7,652.5 740.9,653.4 743.9,654.3 746.5,655.3 748.8,656.3 751.1,657.5 753.2,658.9 755.3,660.6 757.3,662.4 759.2,664.5 761.0,666.7 762.7,669.2 764.4,671.8 765.9,674.6 767.2,677.5 768.4,680.5 769.4,683.6 770.3,686.8 771.0,689.9 771.5,693.0 771.7,696.1 771.8,699.2 771.8,702.3 771.6,705.4 771.3,708.6 770.8,711.7 770.3,714.7 769.7,717.6 769.0,720.3 768.2,723.0 767.2,725.6 765.9,728.3 764.4,731.0 763.0,733.3 762.0,735.0 732.0,775.0 660.0,760.0 660.0,650.0" fill="#00c8ff"/><polygon points="725.0,672.0 727.0,670.7 729.9,668.7 733.2,666.7 736.2,665.1 739.0,663.9 741.9,662.9 744.6,662.2 747.0,662.0 748.9,662.2 750.4,662.8 751.8,663.7 753.2,665.1 754.8,666.9 756.4,669.2 758.0,671.7 759.4,674.4 760.8,677.3 762.0,680.4 763.2,683.6 764.1,686.8 764.8,689.9 765.2,693.0 765.5,696.1 765.6,699.2 765.5,702.3 765.1,705.5 764.6,708.6 764.1,711.6 763.6,714.5 763.2,717.3 762.6,720.0 761.7,722.5 760.4,725.0 758.7,727.4 757.1,729.5 756.0,731.0 726.0,771.0 660.0,760.0 660.0,672.0" fill="#00e6dc"/><polygon points="736.0,690.0 737.5,689.5 739.7,688.7 742.0,687.8 743.9,686.8 745.3,685.6 746.4,684.2 747.4,682.9 748.6,682.2 750.1,682.1 751.8,682.5 753.4,683.3 754.8,684.5 755.8,686.1 756.6,688.1 757.3,690.5 757.9,693.0 758.4,695.8 758.8,699.0 759.1,702.2 759.4,705.4 759.8,708.7 760.3,712.1 760.5,715.3 760.2,717.8 759.0,719.5 757.2,720.7 755.3,721.4 754.0,722.0 724.0,762.0 660.0,760.0 660.0,690.0" fill="#00b482"/><polygon points="744.0,702.0 744.9,700.9 746.2,699.3 747.7,697.8 749.0,697.0 750.1,697.1 751.2,697.7 752.1,698.7 753.0,700.0 753.8,701.6 754.4,703.7 755.0,705.9 755.5,708.0 756.1,710.2 756.8,712.5 757.2,714.6 757.0,716.0 755.7,716.6 753.6,716.5 751.5,716.2 750.0,716.0 720.0,756.0 660.0,760.0 660.0,702.0" fill="#007832"/><polygon points="716.0,504.0 749.0,512.0 749.0,524.0 738.0,520.0 724.0,510.8" fill="#00b482"/><polygon points="730.0,509.0 752.0,514.0 752.0,526.0 738.0,520.0" fill="#00c8ff"/><polygon points="695.0,645.0 731.0,647.0 735.0,668.0 725.0,684.0 700.0,672.0" fill="#0064ff"/><polygon points="697.0,646.0 712.0,647.0 716.0,662.0 704.0,668.0" fill="#00c8ff"/><polygon points="706.0,664.0 722.0,668.0 740.0,660.0 748.0,672.0 730.0,684.0 716.0,677.5" fill="#3c3cf0"/><path d="M1198.2 818.6 L1192.8 818.9 L1187.4 819.3 L1181.9 819.6 L1176.5 820.0 L1171.1 820.3 M1051.3 982.1 L1051.2 976.7 L1051.0 971.3 L1050.8 965.9 L1050.6 960.5 L1050.4 955.1 M1179.2 839.8 L1172.4 837.9 L1165.6 836.0 L1158.8 834.1 L1153.9 831.2 L1149.0 828.3 L1144.2 825.4 L1139.3 822.5 L1133.6 819.0 L1128.0 815.5 L1122.3 812.0 L1116.6 808.6 L1113.0 803.4 L1109.4 798.2 L1105.8 793.0 L1102.2 787.8 L1097.4 782.6 L1092.6 777.4 L1087.8 772.3 M1160.6 860.5 L1155.3 856.9 L1150.1 853.3 L1144.9 849.6 L1138.9 846.2 L1132.9 842.7 L1126.9 839.2 L1121.1 835.8 L1115.3 832.4 L1109.4 829.0 L1104.3 827.2 L1099.1 825.3 L1094.0 823.5 L1089.7 820.0 L1085.5 816.4 L1081.2 812.8 L1077.0 809.3 L1072.4 805.2 L1067.8 801.1 L1063.2 797.1 L1058.7 793.0 M1142.8 880.3 L1137.8 876.4 L1132.8 872.5 L1127.9 868.6 L1122.6 864.9 L1117.4 861.3 L1112.1 857.6 L1107.0 853.9 L1102.0 850.2 L1097.0 846.5 L1092.3 843.4 L1087.6 840.2 L1082.9 837.1 L1078.4 833.2 L1073.8 829.2 L1069.3 825.3 L1064.7 821.4 L1060.0 817.5 L1055.4 813.5 L1050.7 809.6 L1046.0 805.6 M1124.9 900.2 L1120.3 896.0 L1115.6 891.8 L1110.9 887.6 L1106.2 883.3 L1101.5 879.1 L1096.7 874.8 L1092.1 870.7 L1087.5 866.5 L1082.9 862.4 L1078.4 858.6 L1074.0 854.8 L1069.6 851.1 L1065.2 846.8 L1060.8 842.6 L1056.4 838.3 L1052.0 834.1 L1047.4 830.1 L1042.8 826.1 L1038.2 822.1 L1033.5 818.1 M1106.3 920.8 L1102.1 916.2 L1097.9 911.5 L1093.6 906.9 L1089.3 901.7 L1084.9 896.5 L1080.5 891.3 L1076.3 886.7 L1072.1 882.1 L1067.9 877.5 L1064.4 873.3 L1060.8 869.2 L1057.2 865.0 L1053.1 860.9 L1049.0 856.8 L1044.9 852.7 L1040.7 848.6 L1035.9 844.4 L1031.1 840.2 L1026.3 836.0 L1021.5 831.9 M1088.5 940.7 L1084.6 935.7 L1080.6 930.8 L1076.7 925.8 L1073.4 921.3 L1070.1 916.7 L1066.8 912.2 L1063.4 907.6 L1059.6 902.4 L1055.8 897.1 L1052.0 891.9 L1048.1 885.0 L1044.2 878.0 L1040.4 874.0 L1036.6 869.9 L1032.8 865.9 L1029.1 861.9 L1024.5 857.8 L1020.0 853.7 L1015.5 849.6 L1011.0 845.5 M1069.9 961.4 L1067.1 955.2 L1064.3 948.9 L1061.5 942.7 L1057.8 937.6 L1054.1 932.5 L1050.4 927.4 L1046.7 922.3 L1043.2 917.5 L1039.7 912.7 L1036.2 907.9 L1032.8 903.1 L1027.3 900.1 L1021.9 897.1 L1016.5 894.1 L1011.0 891.1 L1005.5 886.8 L1000.0 882.6 L994.4 878.4 M1171.1 820.3 L1166.0 816.4 L1161.0 812.4 L1155.9 808.5 L1151.3 804.8 L1146.7 801.2 L1142.1 797.5 L1137.5 793.8 L1133.1 790.0 L1128.7 786.1 L1124.3 782.2 L1119.9 778.3 L1115.9 774.4 L1111.9 770.4 L1107.9 766.4 L1103.9 762.5 L1099.9 758.5 M1099.2 810.6 L1095.3 806.2 L1091.5 801.7 L1087.6 797.2 L1083.4 793.1 L1079.2 789.1 L1075.0 785.0 L1070.9 780.9 M1032.4 885.0 L1027.8 881.9 L1023.2 878.7 L1018.5 875.5 L1014.2 871.7 L1009.8 867.9 L1005.5 864.1 L1001.1 860.3 M1050.4 955.1 L1046.5 951.6 L1042.6 948.0 L1038.7 944.4 L1034.8 940.8 L1030.0 935.7 L1025.3 930.7 L1020.5 925.6 L1016.3 921.7 L1012.0 917.8 L1007.8 913.9 L1003.5 910.0 L999.2 906.4 L994.9 902.8 L990.6 899.1 L986.3 895.5 L982.0 891.9 M1116.6 808.6 L1110.8 809.2 L1105.0 809.9 L1099.2 810.6 L1096.6 817.1 L1094.0 823.5 L1090.3 828.0 L1086.6 832.6 L1082.9 837.1 L1078.5 841.7 L1074.0 846.4 L1069.6 851.1 L1065.5 855.7 L1061.4 860.4 L1057.2 865.0 L1052.9 869.4 L1048.5 873.7 L1044.2 878.0 L1038.3 881.5 L1032.4 885.0 L1032.5 891.1 L1032.7 897.1 L1032.8 903.1 M1171.1 820.3 L1167.0 824.9 L1162.9 829.5 L1158.8 834.1 L1154.1 839.3 L1149.5 844.5 L1144.9 849.6 L1140.6 854.4 L1136.4 859.1 L1132.1 863.9 L1127.9 868.6 L1123.7 873.3 L1119.4 878.1 L1115.2 882.8 L1110.9 887.6 L1106.5 892.3 L1102.1 897.1 L1097.7 901.8 L1093.3 906.6 L1089.1 911.4 L1085.0 916.2 L1080.8 921.0 L1076.7 925.8 L1072.9 930.1 L1069.1 934.3 L1065.3 938.5 L1061.5 942.7 L1057.8 946.9 L1054.1 951.0 L1050.4 955.1 M1177.4 800.3 L1172.0 802.3 L1166.6 804.4 L1161.3 806.4 L1155.9 808.5 L1151.7 812.0 L1147.6 815.5 L1143.5 819.0 L1139.3 822.5 L1135.2 828.1 L1131.0 833.6 L1126.9 839.2 L1123.2 843.8 L1119.5 848.4 L1115.8 853.0 L1112.1 857.6 L1108.3 861.9 L1104.4 866.2 L1100.6 870.5 L1096.7 874.8 L1092.7 878.9 L1088.6 883.0 L1084.6 887.2 L1080.5 891.3 L1076.2 895.4 L1072.0 899.4 L1067.7 903.5 L1063.4 907.6 L1059.2 911.3 L1055.0 914.9 L1050.9 918.6 L1046.7 922.3 L1043.7 926.9 L1040.7 931.5 L1037.7 936.2 L1034.8 940.8 L1033.9 946.5 L1033.1 952.2 L1032.2 958.0 L1031.3 963.7 M1156.2 781.7 L1151.5 784.7 L1146.8 787.8 L1142.2 790.8 L1137.5 793.8 L1132.3 797.5 L1127.1 801.2 L1121.8 804.9 L1116.6 808.6 L1114.8 813.7 L1113.0 818.8 L1111.2 823.9 L1109.4 829.0 L1106.3 833.4 L1103.2 837.8 L1100.1 842.1 L1097.0 846.5 L1093.4 850.5 L1089.9 854.5 L1086.4 858.4 L1082.9 862.4 L1079.1 866.2 L1075.4 869.9 L1071.7 873.7 L1067.9 877.5 L1063.9 881.1 L1060.0 884.7 L1056.0 888.3 L1052.0 891.9 L1047.2 894.7 L1042.4 897.5 L1037.6 900.3 L1032.8 903.1 L1029.7 908.7 L1026.7 914.3 L1023.6 920.0 L1020.5 925.6 L1018.2 930.4 L1015.8 935.3 L1013.4 940.1 L1011.0 945.0 M1134.6 762.8 L1130.9 766.7 L1127.3 770.5 L1123.6 774.4 L1119.9 778.3 L1114.0 781.5 L1108.1 784.6 L1102.2 787.8 L1097.3 790.9 L1092.5 794.1 L1087.6 797.2 L1084.1 801.3 L1080.5 805.3 L1077.0 809.3 L1072.9 813.3 L1068.8 817.4 L1064.7 821.4 L1060.5 825.6 L1056.2 829.9 L1052.0 834.1 L1048.3 838.9 L1044.5 843.8 L1040.7 848.6 L1036.8 853.0 L1033.0 857.4 L1029.1 861.9 L1025.6 866.4 L1022.0 871.0 L1018.5 875.5 L1016.0 880.7 L1013.5 885.9 L1011.0 891.1 L1008.5 897.4 L1006.0 903.7 L1003.5 910.0 L999.1 915.3 L994.7 920.7 L990.3 926.0 M1113.7 744.5 L1109.1 749.2 L1104.5 753.8 L1099.9 758.5 L1095.2 762.6 L1090.6 766.6 L1086.0 770.7 L1081.0 774.1 L1075.9 777.5 L1070.9 780.9 L1066.8 784.9 L1062.7 788.9 L1058.7 793.0 L1054.5 797.2 L1050.2 801.4 L1046.0 805.6 L1041.9 809.8 L1037.7 813.9 L1033.5 818.1 L1029.5 822.7 L1025.5 827.3 L1021.5 831.9 L1018.0 836.4 L1014.5 841.0 L1011.0 845.5 L1007.7 850.5 L1004.4 855.4 L1001.1 860.3 L998.0 865.6 L995.0 870.8 L991.9 876.1 L988.6 881.3 L985.3 886.6 L982.0 891.9 L978.1 897.1 L974.2 902.3 L970.3 907.6 M1091.9 725.7 L1087.9 730.2 L1083.9 734.7 L1080.0 739.2 L1076.0 743.8 L1072.1 748.3 L1068.1 752.8 L1064.1 757.3 L1060.2 761.9 L1056.2 766.4 L1052.3 770.9 L1048.3 775.4 L1044.4 779.9 L1040.4 784.5 L1036.4 789.0 L1032.5 793.5 L1028.5 798.0 L1024.6 802.6 L1020.6 807.1 L1016.6 811.6 L1012.7 816.1 L1008.7 820.6 L1004.8 825.2 L1000.8 829.7 L996.9 834.2 L992.9 838.7 L988.9 843.3 L985.0 847.8 L981.0 852.3 L977.1 856.8 L973.1 861.4 L969.1 865.9 L965.2 870.4 L961.2 874.9 L957.3 879.4 L953.3 884.0 L949.4 888.5 M1070.6 707.3 L1066.6 711.8 L1062.7 716.3 L1058.7 720.8 L1054.8 725.3 L1050.8 729.8 L1046.8 734.3 L1042.9 738.8 L1038.9 743.3 L1035.0 747.8 L1031.0 752.3 L1027.1 756.8 L1023.1 761.3 L1019.1 765.8 L1015.2 770.3 L1011.2 774.8 L1007.3 779.2 L1003.3 783.7 L999.4 788.2 L995.4 792.7 L991.4 797.2 L987.5 801.7 L983.5 806.2 L979.6 810.7 L975.6 815.2 L971.7 819.7 L967.7 824.2 L963.8 828.7 L959.8 833.2 L955.8 837.7 L951.9 842.2 L947.9 846.7 L944.0 851.2 L940.0 855.7 L936.1 860.2 L932.1 864.7 L928.1 869.2 M1049.3 689.1 L1045.4 693.6 L1041.4 698.1 L1037.5 702.6 L1033.6 707.1 L1029.6 711.6 L1025.7 716.1 L1021.8 720.6 L1017.8 725.1 L1013.9 729.6 L1010.0 734.1 L1006.1 738.6 L1002.1 743.0 L998.2 747.5 L994.3 752.0 L990.3 756.5 L986.4 761.0 L982.5 765.5 L978.5 770.0 L974.6 774.5 L970.7 779.0 L966.7 783.5 L962.8 788.0 L958.9 792.5 L954.9 797.0 L951.0 801.5 L947.1 805.9 L943.2 810.4 L939.2 814.9 L935.3 819.4 L931.4 823.9 L927.4 828.4 L923.5 832.9 L919.6 837.4 L915.6 841.9 L911.7 846.4 L907.8 850.9 M1028.0 671.1 L1024.1 675.7 L1020.2 680.2 L1016.3 684.7 L1012.4 689.2 L1008.5 693.7 L1004.6 698.2 L1000.7 702.7 L996.8 707.2 L992.9 711.7 L989.0 716.2 L985.1 720.7 L981.2 725.2 L977.3 729.7 L973.4 734.3 L969.5 738.8 L965.6 743.3 L961.7 747.8 L957.8 752.3 L953.9 756.8 L950.0 761.3 L946.0 765.8 L942.1 770.3 L938.2 774.8 L934.3 779.3 L930.4 783.8 L926.5 788.3 L922.6 792.9 L918.7 797.4 L914.8 801.9 L910.9 806.4 L907.0 810.9 L903.1 815.4 L899.2 819.9 L895.3 824.4 L891.4 828.9 L887.5 833.4 M1007.1 653.2 L1003.2 657.7 L999.3 662.1 L995.4 666.6 L991.5 671.1 L987.6 675.6 L983.7 680.1 L979.9 684.6 L976.0 689.1 L972.1 693.6 L968.2 698.1 L964.3 702.6 L960.4 707.1 L956.5 711.6 L952.6 716.1 L948.8 720.6 L944.9 725.1 L941.0 729.6 L937.1 734.1 L933.2 738.6 L929.3 743.1 L925.4 747.6 L921.5 752.1 L917.6 756.6 L913.8 761.1 L909.9 765.6 L906.0 770.1 L902.1 774.6 L898.2 779.1 L894.3 783.6 L890.4 788.1 L886.5 792.6 L882.7 797.1 L878.8 801.6 L874.9 806.1 L871.0 810.6 L867.1 815.1 M986.2 635.0 L982.3 639.5 L978.4 644.0 L974.6 648.5 L970.7 653.0 L966.8 657.6 L962.9 662.1 L959.1 666.6 L955.2 671.1 L951.3 675.6 L947.5 680.2 L943.6 684.7 L939.7 689.2 L935.9 693.7 L932.0 698.2 L928.1 702.7 L924.2 707.3 L920.4 711.8 L916.5 716.3 L912.6 720.8 L908.8 725.3 L904.9 729.9 L901.0 734.4 L897.1 738.9 L893.3 743.4 L889.4 747.9 L885.5 752.4 L881.7 757.0 L877.8 761.5 L873.9 766.0 L870.0 770.5 L866.2 775.0 L862.3 779.6 L858.4 784.1 L854.6 788.6 L850.7 793.1 L846.8 797.6 M965.1 616.9 L961.2 621.5 L957.4 626.0 L953.5 630.5 L949.7 635.1 L945.8 639.6 L942.0 644.2 L938.1 648.7 L934.3 653.2 L930.4 657.8 L926.6 662.3 L922.7 666.8 L918.9 671.4 L915.0 675.9 L911.2 680.4 L907.3 685.0 L903.5 689.5 L899.6 694.1 L895.8 698.6 L891.9 703.1 L888.1 707.7 L884.2 712.2 L880.4 716.7 L876.5 721.3 L872.7 725.8 L868.8 730.3 L865.0 734.9 L861.1 739.4 L857.3 744.0 L853.4 748.5 L849.5 753.0 L845.7 757.6 L841.8 762.1 L838.0 766.6 L834.1 771.2 L830.3 775.7 L826.4 780.2 M943.6 599.6 L939.8 604.2 L935.9 608.7 L932.1 613.2 L928.3 617.8 L924.5 622.3 L920.7 626.8 L916.9 631.4 L913.0 635.9 L909.2 640.4 L905.4 645.0 L901.6 649.5 L897.8 654.0 L895.1 659.5 L892.5 665.0 L889.8 670.5 L886.7 675.6 L883.5 680.6 L880.3 685.7 L875.8 689.7 L871.4 693.7 L866.9 697.7 L861.9 701.3 L856.9 704.9 L852.0 708.5 L848.1 713.0 L844.3 717.6 L840.5 722.1 L836.7 726.6 L832.9 731.2 L829.1 735.7 L825.2 740.2 L821.4 744.8 L817.6 749.3 L813.8 753.8 L810.0 758.4 L806.2 762.9 M921.7 583.1 L918.4 587.2 L915.1 591.2 L911.8 595.3 L908.5 599.3 L905.2 603.4 L901.9 607.4 L898.6 611.5 L895.3 615.5 L892.0 619.6 L888.7 623.6 L885.4 627.7 L881.9 631.5 L878.4 635.3 L874.9 639.1 L871.5 643.0 M836.6 686.6 L833.2 690.8 L829.8 694.9 L826.3 699.0 L822.9 703.2 L819.4 707.3 L816.0 711.4 L812.6 715.5 L809.1 719.7 L805.3 724.2 L801.6 728.7 L797.8 733.3 L794.0 737.8 L790.3 742.3 L786.5 746.9 M896.4 567.9 L893.3 572.8 L890.2 577.7 L887.1 582.5 L884.0 587.4 L880.9 592.3 L877.8 597.2 L874.7 602.1 L871.5 606.9 L868.4 611.8 L865.2 616.6 L862.0 621.5 L858.9 626.3 L855.3 630.9 L851.7 635.4 L848.1 640.0 L844.0 644.3 L839.9 648.6 L835.8 652.9 L833.4 658.0 L830.9 663.2 L828.4 668.3 L825.3 673.1 L822.2 678.0 L819.1 682.8 L815.7 687.4 L812.2 692.0 L808.7 696.5 L805.3 701.1 L801.8 705.7 L798.3 710.2 L794.8 714.7 L791.2 719.3 L787.7 723.8 L784.2 728.3 L780.7 732.8 L777.1 737.3 M868.9 556.9 L866.5 562.0 L864.1 567.1 L861.6 572.1 L859.2 577.2 L856.7 582.3 L854.3 587.3 L851.8 592.3 L849.3 597.3 L846.8 602.3 L844.2 607.3 L841.6 612.2 L839.0 617.1 L836.4 622.0 L833.7 626.9 L831.1 631.7 L828.3 636.5 L825.6 641.3 L822.8 646.1 L820.0 650.8 L817.1 655.5 L814.2 660.2 L811.3 664.8 L808.4 669.4 L805.4 674.0 L802.4 678.6 L799.3 683.1 L796.3 687.6 L793.2 692.1 L790.1 696.6 L786.9 701.1 L783.8 705.5 L780.6 710.0 L777.5 714.4 L774.3 718.8 L771.1 723.2 L767.9 727.6 M841.2 546.7 L839.3 551.9 L837.5 557.0 L835.7 562.1 L833.8 567.2 L832.0 572.3 L830.1 577.4 L828.2 582.5 L826.3 587.6 L824.4 592.6 L822.4 597.6 L820.4 602.6 L818.4 607.6 L816.3 612.5 L814.2 617.4 L812.0 622.2 L809.9 627.1 L807.7 631.9 L805.4 636.6 L803.1 641.4 L800.8 646.1 L798.4 650.7 L796.0 655.3 L793.5 659.9 L791.0 664.5 L788.5 669.0 L786.0 673.5 L783.4 678.0 L780.8 682.5 L778.1 686.9 L775.5 691.3 L772.8 695.7 L770.1 700.1 L767.4 704.5 L764.7 708.8 L761.9 713.2 L759.2 717.5 M813.7 535.8 L812.4 540.9 L811.1 546.0 L809.8 551.1 L808.5 556.2 L807.2 561.3 L805.8 566.3 L804.5 571.4 L803.1 576.4 L801.7 581.4 L800.3 586.4 L798.8 591.4 L797.3 596.3 L795.8 601.2 L794.2 606.1 L792.7 611.0 L791.0 615.8 L789.4 620.6 L787.7 625.3 L785.9 630.0 L784.2 634.7 L782.3 639.4 L780.5 644.0 L778.6 648.6 L776.7 653.2 L774.8 657.7 L772.8 662.2 L770.8 666.7 L768.7 671.2 L766.7 675.6 L764.6 680.0 L762.5 684.5 L760.4 688.9 L758.3 693.2 L756.1 697.6 L754.0 702.0 L751.8 706.4 M786.2 524.9 L785.3 529.9 L784.4 534.9 L783.5 539.9 L782.6 544.9 L781.7 549.9 L780.8 554.9 L779.9 559.9 L778.9 564.9 L778.0 569.8 L777.0 574.7 L776.0 579.6 L775.0 584.5 L773.9 589.4 L772.9 594.3 L771.8 599.1 L770.7 603.9 L769.5 608.7 L768.3 613.4 L767.1 618.2 L765.9 622.9 L764.7 627.6 L763.4 632.3 L762.1 636.9 L760.8 641.5 L759.4 646.2 L758.0 650.7 L756.7 655.3 L755.2 659.9 L753.8 664.4 L752.4 668.9 L750.9 673.4 L749.4 677.9 L748.0 682.4 L746.5 686.9 L745.0 691.4 L743.5 695.9 M1100.7 757.5 L1096.7 753.9 L1092.6 750.4 L1088.6 746.8 L1084.5 743.2 L1080.5 739.7 L1076.3 736.1 L1072.2 732.5 L1068.1 728.9 L1064.0 725.3 L1059.8 721.8 L1055.7 718.2 L1051.6 714.7 L1047.5 711.2 L1043.4 707.7 L1039.3 704.1 L1035.2 700.6 L1031.1 697.2 L1027.0 693.7 L1022.8 690.2 L1018.7 686.7 L1014.7 683.2 L1010.6 679.7 L1006.6 676.3 L1002.5 672.8 L998.4 669.3 L994.4 665.8 L990.3 662.2 L986.3 658.7 L982.3 655.2 L978.2 651.7 L974.2 648.2 L970.1 644.7 L966.0 641.2 L961.9 637.7 L957.9 634.2 L953.8 630.8 L949.6 627.4 L945.5 624.0 L941.3 620.6 L937.2 617.3 L933.0 613.9 L928.9 610.7 L924.7 607.5 L920.5 604.3 L916.3 601.1 L912.1 597.9 L907.7 595.0 L903.3 592.0 L898.9 589.1 L894.4 586.3 L889.7 583.8 L884.9 581.5 L880.0 579.4 L875.1 577.4 L870.1 575.4 L865.1 573.5 L860.1 571.5 L855.1 569.6 L850.1 567.7 L845.0 565.7 L840.0 563.8 L834.9 561.8 L829.9 559.8 L824.9 557.7 L819.9 555.5 L814.9 553.3 L809.8 551.1 L804.8 548.9 L799.7 546.7 L794.6 544.6 L789.5 542.4 L784.4 540.3 L779.2 538.2 L774.0 536.3 L768.7 534.4 M1088.8 771.1 L1084.8 767.5 L1080.7 763.9 L1076.7 760.4 L1072.7 756.8 L1068.6 753.2 L1064.5 749.6 L1060.3 746.0 L1056.2 742.4 L1052.1 738.8 L1048.0 735.3 L1043.9 731.7 L1039.8 728.2 L1035.7 724.7 L1031.6 721.1 L1027.5 717.6 L1023.4 714.1 L1019.3 710.7 L1015.2 707.2 L1011.1 703.7 L1007.0 700.3 L1003.0 696.8 L998.9 693.3 L994.9 689.8 L990.8 686.3 L986.8 682.8 L982.7 679.3 L978.7 675.8 L974.7 672.3 L970.6 668.8 L966.6 665.2 L962.6 661.8 L958.5 658.3 L954.4 654.8 L950.4 651.3 L946.3 647.8 L942.2 644.4 L938.1 641.0 L934.0 637.6 L929.8 634.3 L925.7 630.9 L921.6 627.5 L917.4 624.3 L913.3 621.1 L909.1 617.9 L904.9 614.8 L900.8 611.6 L896.7 608.8 L892.7 606.0 L888.6 603.3 L884.4 600.8 L880.2 598.4 L875.7 596.2 L871.2 594.2 L866.7 592.3 L862.1 590.5 L857.5 588.6 L852.8 586.7 L848.2 584.8 L843.5 582.9 L838.8 581.0 L834.1 579.1 L829.4 577.1 L824.7 575.1 L820.0 573.0 L815.3 570.8 L810.6 568.6 L805.9 566.3 L801.1 564.1 L796.3 561.9 L791.4 559.7 L786.5 557.5 L781.6 555.3 L776.7 553.1 L771.6 551.1 L766.6 549.2 M1071.6 780.0 L1067.6 776.4 L1063.5 772.8 L1059.4 769.2 L1055.3 765.6 L1051.1 761.9 L1047.0 758.3 L1042.8 754.6 L1038.6 751.0 L1034.5 747.4 L1030.4 743.8 L1026.3 740.2 L1022.1 736.7 L1018.0 733.1 L1013.9 729.6 L1009.8 726.1 L1005.7 722.6 L1001.5 719.1 L997.4 715.6 L993.3 712.1 L989.2 708.5 L985.2 705.0 L981.1 701.5 L977.0 697.9 L972.9 694.4 L968.9 690.9 L964.8 687.3 L960.8 683.8 L956.7 680.3 L952.7 676.8 L948.6 673.3 L944.5 669.8 L940.4 666.2 L936.3 662.7 L932.2 659.2 L928.0 655.8 L923.9 652.4 L919.8 649.0 L915.6 645.6 L911.5 642.2 L907.3 639.0 L903.1 635.7 L898.9 632.5 L894.8 629.3 L890.6 626.0 L886.7 623.3 L883.0 620.7 L879.2 618.1 L875.4 615.7 L871.5 613.4 L867.4 611.3 L863.2 609.4 L859.0 607.5 L854.8 605.7 L850.5 603.9 L846.2 602.0 L841.8 600.2 L837.5 598.3 L833.1 596.4 L828.7 594.5 L824.2 592.6 L819.8 590.5 L815.4 588.4 L811.0 586.2 L806.5 583.9 L802.1 581.6 L797.5 579.3 L792.9 577.1 L788.3 574.8 L783.6 572.5 L778.9 570.2 L774.1 568.0 L769.3 565.9 L764.4 563.9 M1058.8 792.8 L1054.8 789.2 L1050.8 785.6 L1046.7 782.0 L1042.6 778.4 L1038.4 774.7 L1034.3 771.1 L1030.1 767.4 L1026.0 763.8 L1021.9 760.2 L1017.8 756.6 L1013.7 753.1 L1009.6 749.5 L1005.5 745.9 L1001.4 742.4 L997.3 739.0 L993.2 735.5 L989.1 732.0 L985.0 728.5 L981.0 725.0 L976.9 721.5 L972.9 718.0 L968.8 714.4 L964.7 710.9 L960.7 707.4 L956.7 703.9 L952.6 700.4 L948.6 696.9 L944.5 693.4 L940.5 689.9 L936.4 686.4 L932.4 682.9 L928.3 679.4 L924.2 675.9 L920.2 672.4 L916.0 669.1 L911.9 665.7 L907.8 662.3 L903.7 658.9 L899.6 655.5 L895.4 652.2 L891.3 649.0 L887.2 645.8 L883.0 642.6 L878.9 639.4 L875.3 636.8 L871.9 634.4 L868.5 632.0 L865.0 629.8 L861.4 627.6 L857.7 625.7 L853.9 623.8 L850.0 622.1 L846.2 620.3 L842.2 618.6 L838.3 616.8 L834.3 615.0 L830.3 613.1 L826.2 611.3 L822.2 609.4 L818.1 607.4 L814.0 605.4 L809.9 603.2 L805.8 601.0 L801.7 598.8 L797.6 596.5 L793.3 594.2 L789.0 591.9 L784.7 589.6 L780.3 587.3 L775.8 585.0 L771.3 582.7 L766.7 580.5 L762.0 578.4 M1046.0 805.6 L1042.0 802.0 L1038.0 798.4 L1033.9 794.8 L1029.8 791.1 L1025.6 787.4 L1021.4 783.8 L1017.3 780.1 L1013.1 776.4 L1009.0 772.8 L1004.9 769.2 L1000.8 765.7 L996.7 762.1 L992.6 758.5 L988.6 755.0 L984.5 751.5 L980.4 748.1 L976.3 744.6 L972.2 741.1 L968.2 737.6 L964.1 734.1 L960.0 730.5 L956.0 726.9 L951.9 723.4 L947.9 719.9 L943.8 716.4 L939.8 712.9 L935.8 709.4 L931.7 705.9 L927.7 702.4 L923.6 698.9 L919.5 695.4 L915.5 691.9 L911.4 688.4 L907.3 685.0 L902.9 681.4 L898.6 677.7 L894.2 674.1 L889.8 670.5 L883.6 667.9 L877.3 665.4 L871.0 662.8 M853.9 650.0 L852.1 646.6 L850.2 643.2 L848.1 640.0 L843.9 637.9 L839.7 635.9 L835.4 633.8 L831.1 631.7 L827.4 629.9 L823.7 628.1 L819.9 626.3 L816.1 624.4 L812.3 622.4 L808.5 620.3 L804.7 618.2 L800.9 615.9 L797.1 613.6 L793.2 611.3 L789.2 609.0 L785.2 606.6 L781.1 604.3 L776.9 601.9 L772.7 599.6 L768.4 597.3 L764.0 595.0 L759.6 592.9 M1033.3 818.4 L1029.3 814.8 L1025.3 811.2 L1021.2 807.6 L1017.1 804.0 L1013.0 800.3 L1008.8 796.6 L1004.7 793.0 L1000.6 789.3 L996.5 785.7 L992.4 782.2 L988.4 778.6 L984.3 775.1 L980.3 771.5 L976.3 768.1 L972.2 764.6 L968.2 761.2 L964.1 757.7 L960.1 754.3 L956.1 750.8 L952.0 747.2 L948.0 743.7 L944.0 740.2 L940.0 736.6 L936.0 733.1 L932.0 729.7 L928.0 726.2 L923.9 722.7 L919.9 719.3 L915.9 715.8 L911.9 712.4 L907.9 708.9 L903.8 705.5 L899.8 702.0 L895.8 698.6 L890.6 694.3 L885.4 690.0 L880.3 685.7 L874.6 680.8 L868.9 676.0 M843.9 657.1 L839.9 654.9 L835.8 652.9 L832.6 651.2 L829.4 649.5 L826.1 647.8 L822.8 646.1 L819.4 644.3 L816.0 642.5 L812.6 640.6 L809.1 638.7 L805.6 636.8 L802.2 634.7 L798.7 632.5 L795.2 630.3 L791.7 628.0 L788.2 625.6 L784.5 623.3 L780.8 621.0 L777.0 618.6 L773.1 616.3 L769.2 613.9 L765.2 611.6 L761.1 609.4 L757.0 607.2 M1021.3 832.0 L1017.4 828.4 L1013.4 824.8 L1009.4 821.2 L1005.2 817.5 L1001.1 813.8 L996.9 810.1 L992.8 806.5 L988.7 802.8 L984.6 799.2 L980.6 795.7 L976.6 792.1 L972.5 788.5 L968.5 785.0 L964.5 781.5 L960.4 778.1 L956.4 774.7 L952.4 771.3 L948.4 767.8 L944.3 764.3 L940.3 760.8 L936.3 757.2 L932.3 753.7 L928.3 750.1 L924.3 746.6 L920.3 743.2 L916.3 739.7 L912.3 736.3 L908.3 732.8 L904.3 729.4 L900.3 725.9 L896.3 722.5 L892.3 719.1 L888.2 715.6 L884.2 712.2 L879.9 708.6 L875.6 705.0 L871.2 701.3 L866.9 697.7 L863.4 691.9 L859.9 686.1 L856.3 680.3 M841.1 669.4 L836.9 668.9 L832.6 668.5 L828.4 668.3 L824.9 666.3 L821.4 664.3 L817.8 662.2 L814.2 660.2 L811.2 658.4 L808.1 656.6 L804.9 654.7 L801.8 652.8 L798.6 650.9 L795.5 648.8 L792.3 646.6 L789.2 644.4 L786.0 642.1 L782.8 639.7 L779.5 637.4 L776.1 635.1 L772.6 632.7 L769.0 630.4 L765.4 628.1 L761.8 625.8 L758.0 623.6 L754.2 621.4 M1010.3 846.4 L1006.3 842.8 L1002.3 839.2 L998.4 835.6 L994.2 831.9 L990.1 828.2 L986.0 824.5 L981.8 820.8 L977.7 817.0 L973.6 813.5 L969.6 809.9 L965.6 806.3 L961.6 802.8 L957.5 799.2 L953.5 795.7 L949.5 792.3 L945.5 788.9 L941.5 785.5 L937.5 782.1 L933.5 778.6 L929.5 775.0 L925.5 771.5 L921.5 767.9 L917.5 764.4 L913.5 760.9 L909.5 757.4 L905.5 754.0 L901.5 750.5 L897.5 747.1 L893.5 743.6 L889.5 740.2 L885.5 736.8 L881.5 733.3 L877.5 729.9 L873.5 726.5 L869.4 723.1 L865.4 719.7 L861.4 716.3 L857.4 713.0 L853.3 709.6 L849.3 706.4 L845.2 703.2 L841.2 700.0 L837.1 696.7 L833.1 693.5 L830.5 691.4 L828.1 689.5 L825.6 687.6 L823.2 685.7 L820.7 683.8 L818.1 682.1 L815.5 680.4 L812.8 678.7 L810.1 677.0 L807.4 675.3 L804.7 673.6 L801.9 671.8 L799.2 670.0 L796.4 668.2 L793.6 666.3 L790.7 664.3 L788.0 662.2 L785.2 660.1 L782.4 657.8 L779.7 655.6 L776.8 653.3 L773.9 651.0 L770.8 648.7 L767.7 646.5 L764.6 644.2 L761.3 641.9 L758.0 639.7 L754.7 637.5 L751.2 635.4 M1000.1 861.5 L996.1 857.9 L992.1 854.3 L988.1 850.7 L984.1 847.0 L979.9 843.2 L975.7 839.5 L971.6 835.7 L967.4 832.0 L963.3 828.3 L959.3 824.7 L955.2 821.1 L951.2 817.5 L947.2 814.0 L943.1 810.4 L939.1 807.0 L935.1 803.6 L931.1 800.1 L927.1 796.7 L923.0 793.2 L919.0 789.6 L915.0 786.1 L911.0 782.5 L907.0 778.9 L902.9 775.3 L899.0 771.9 L895.0 768.4 L891.0 765.0 L887.0 761.5 L883.0 758.1 L878.9 754.6 L874.9 751.2 L870.9 747.8 L866.9 744.3 L862.8 740.9 L858.8 737.5 L854.8 734.1 L850.7 730.7 L846.7 727.3 L842.7 723.9 L838.6 720.6 L834.6 717.4 L830.5 714.1 L826.5 710.9 L822.4 707.7 L819.6 705.4 L817.4 703.5 L815.1 701.6 L812.9 699.7 L810.5 697.9 L808.2 696.1 L805.8 694.4 L803.3 692.6 L800.9 690.9 L798.4 689.2 L795.9 687.4 L793.4 685.6 L790.9 683.8 L788.4 681.9 L785.8 679.9 L783.3 678.0 L780.8 675.9 L778.4 673.7 L775.9 671.5 L773.5 669.2 L771.0 666.9 L768.4 664.6 L765.7 662.4 L762.9 660.2 L760.1 657.9 L757.2 655.7 L754.3 653.5 L751.2 651.4 L748.2 649.4 M993.3 879.7 L989.4 876.2 L985.4 872.6 L981.5 869.0 L977.6 865.4 L973.6 861.8 L969.5 858.1 L965.3 854.3 L961.2 850.6 L957.1 846.9 L953.0 843.2 L949.0 839.6 L945.0 836.1 L941.0 832.5 L937.1 829.0 L933.1 825.4 L929.1 822.0 L925.1 818.6 L921.2 815.2 L917.2 811.8 L913.3 808.4 L909.3 804.9 L905.3 801.4 L901.3 797.8 L897.4 794.3 L893.4 790.7 L889.4 787.2 L885.5 783.8 L881.5 780.4 L877.6 777.0 L873.6 773.6 L869.7 770.2 L865.7 766.8 L861.7 763.4 L857.7 760.0 L853.8 756.6 L849.8 753.2 L845.8 749.9 L841.9 746.5 L837.9 743.1 L833.9 739.8 L829.9 736.4 L825.9 733.2 L822.0 730.0 L818.0 726.8 L814.0 723.6 L810.0 720.4 L807.8 718.5 L805.7 716.6 L803.7 714.8 L801.6 713.0 L799.4 711.1 L797.3 709.4 L795.1 707.6 L792.9 705.9 L790.7 704.1 L788.5 702.3 L786.3 700.5 L784.0 698.7 L781.8 696.8 L779.6 694.9 L777.3 693.0 L775.1 691.0 L773.0 688.9 L770.9 686.8 L768.8 684.5 L766.8 682.3 L764.6 680.1 L762.4 677.9 L760.1 675.7 L757.7 673.5 L755.3 671.4 L752.8 669.3 L750.2 667.2 L747.6 665.2 L745.0 663.2 M981.0 893.0 L977.1 889.4 L973.2 885.9 L969.3 882.3 L965.4 878.7 L961.4 875.1 L957.3 871.3 L953.1 867.6 L949.0 863.9 L944.9 860.1 L940.8 856.4 L936.8 852.9 L932.9 849.3 L928.9 845.7 L925.0 842.2 L921.0 838.6 L917.1 835.2 L913.1 831.9 L909.2 828.5 L905.2 825.1 L901.3 821.7 L897.3 818.2 L893.4 814.7 L889.4 811.1 L885.5 807.6 L881.5 804.0 L877.6 800.6 L873.6 797.2 L869.7 793.8 L865.7 790.4 L861.8 787.0 L857.9 783.6 L853.9 780.2 L849.9 776.8 L846.0 773.4 L842.0 770.1 L838.1 766.7 L834.1 763.3 L830.2 760.0 L826.2 756.6 L822.3 753.2 L818.3 749.9 L814.4 746.7 L810.4 743.5 L806.4 740.3 L802.5 737.1 L798.5 733.9 L796.5 732.1 L794.6 730.2 L792.6 728.4 L790.7 726.5 L788.7 724.7 L786.7 722.9 L784.8 721.1 L782.8 719.3 L780.8 717.5 L778.8 715.6 L776.8 713.8 L774.8 711.9 L772.8 710.0 L770.9 708.1 L769.0 706.1 L767.1 704.1 L765.2 702.0 L763.5 699.9 L761.8 697.7 L760.0 695.4 L758.3 693.2 L756.4 691.1 L754.4 689.0 L752.4 686.9 L750.4 684.8 L748.3 682.8 L746.2 680.8 L744.0 678.8 L741.7 676.9 M868.9 676.0 L870.0 669.4 L871.0 662.8 L871.0 657.7 L871.0 652.7 L871.0 647.6 L871.5 643.0 L865.5 645.2 L859.7 647.6 L853.9 650.0 L848.9 653.5 L843.9 657.1 L842.6 663.2 L841.1 669.4 L839.7 675.2 L838.2 680.9 L836.6 686.6 L841.2 684.8 L846.3 683.3 L851.3 681.8 L856.3 680.3 L862.6 678.2 L868.9 676.0 M871.0 662.8 L865.4 663.4 L859.8 664.0 L854.6 664.9 L850.0 666.4 L845.5 667.9 L841.1 669.4 M853.9 650.0 L854.1 654.8 L854.2 659.5 L854.2 664.2 L854.5 669.2 L855.4 674.7 L856.3 680.3 M770.8 519.7 L764.8 517.9 L758.8 516.2 L752.8 514.6 L746.8 513.0 L740.8 511.4 M768.7 534.4 L762.9 532.6 L757.1 530.8 L751.3 529.0 L745.5 527.3 L739.7 525.6 M766.6 549.2 L761.0 547.2 L755.4 545.3 L749.8 543.5 L744.1 541.6 L738.5 539.9 M764.4 563.9 L759.0 561.8 L753.6 559.8 L748.2 557.9 L742.7 556.0 L737.3 554.2 M762.0 578.4 L756.9 576.3 L751.8 574.2 L746.6 572.2 L741.3 570.3 L736.2 568.5 M759.6 592.9 L754.8 590.7 L749.9 588.6 L744.9 586.6 L739.9 584.6 L735.0 582.8 M757.0 607.2 L752.4 605.0 L747.8 602.9 L743.2 600.8 L738.4 598.9 L733.8 597.1 M754.2 621.4 L750.0 619.2 L745.7 617.1 L741.4 615.1 L737.0 613.1 L732.6 611.4 M751.2 635.4 L747.4 633.3 L743.5 631.2 L739.5 629.2 L735.5 627.3 L731.5 625.6 M748.2 649.4 L744.7 647.2 L741.2 645.2 L737.6 643.4 L733.9 641.5 L730.3 639.9 M745.0 663.2 L742.0 661.1 L738.9 659.2 L735.7 657.4 L732.4 655.7 L729.1 654.2 M741.7 676.9 L739.1 675.0 L736.5 673.2 L733.7 671.5 L730.8 669.9 L728.0 668.5 M738.4 690.6 L736.3 688.8 L734.0 687.1 L731.7 685.5 L729.3 684.1 L726.8 682.8 M795.6 536.8 L790.3 534.6 L784.8 532.4 L779.4 530.4 L773.9 528.4 L768.3 526.6 L762.7 524.9 L757.1 523.3 L751.5 521.7 L745.9 520.1 L740.2 518.5 M792.5 551.9 L787.4 549.7 L782.2 547.4 L776.9 545.3 L771.6 543.3 L766.3 541.4 L760.9 539.5 L755.4 537.8 L750.0 536.1 L744.5 534.4 L739.1 532.8 M789.3 567.0 L784.4 564.7 L779.4 562.4 L774.4 560.2 L769.3 558.1 L764.2 556.1 L759.0 554.1 L753.7 552.3 L748.4 550.5 L743.1 548.7 L737.9 547.1 M785.9 581.9 L781.2 579.5 L776.5 577.2 L771.7 574.9 L766.9 572.7 L762.0 570.7 L757.0 568.7 L751.9 566.7 L746.9 564.9 L741.8 563.0 L736.7 561.4 M764.9 653.0 L761.9 650.7 L758.7 648.4 L755.5 646.2 L752.2 644.0 L748.9 641.9 L745.4 639.9 L741.8 637.9 L738.2 636.1 L734.5 634.4 L730.9 632.8 M760.0 666.6 L757.3 664.4 L754.5 662.1 L751.7 660.0 L748.8 657.8 L745.8 655.8 L742.8 653.8 L739.6 652.0 L736.3 650.2 L733.0 648.6 L729.7 647.1 M754.9 680.0 L752.5 677.8 L750.2 675.7 L747.8 673.6 L745.3 671.5 L742.7 669.6 L740.0 667.7 L737.2 665.9 L734.4 664.3 L731.5 662.8 L728.6 661.4 M749.6 693.3 L747.7 691.2 L745.7 689.2 L743.7 687.2 L741.6 685.2 L739.5 683.3 L737.3 681.5 L734.9 679.9 L732.4 678.4 L729.9 676.9 L727.4 675.6 M770.8 519.7 L770.2 524.0 L769.5 528.3 L768.9 532.6 L768.3 537.0 L767.7 541.3 L767.1 545.6 L766.4 549.9 L765.8 554.2 L765.2 558.5 L764.5 562.8 L763.9 567.1 L763.2 571.3 L762.5 575.6 L761.8 579.9 L761.1 584.1 L760.4 588.3 L759.6 592.5 L758.9 596.8 L758.1 600.9 L757.3 605.1 L756.6 609.3 L755.8 613.5 L754.9 617.6 L754.1 621.7 L753.3 625.9 L752.4 630.0 L751.5 634.1 L750.6 638.2 L749.7 642.2 L748.8 646.3 L747.9 650.4 L747.0 654.4 L746.1 658.5 L745.1 662.5 L744.2 666.5 L743.2 670.6 L742.3 674.6 L741.3 678.6 L740.3 682.6 L739.3 686.6 L738.4 690.6 M755.1 515.2 L754.6 519.5 L754.2 523.7 L753.7 527.9 L753.2 532.2 L752.8 536.4 L752.3 540.6 L751.8 544.9 L751.3 549.1 L750.9 553.3 L750.4 557.6 L749.9 561.8 L749.4 566.0 L748.9 570.2 L748.4 574.4 L747.9 578.6 L747.4 582.8 L746.8 587.0 L746.3 591.2 L745.8 595.4 L745.2 599.5 L744.7 603.7 L744.1 607.9 L743.6 612.0 L743.0 616.2 L742.4 620.3 L741.8 624.5 L741.2 628.6 L740.6 632.7 L740.1 636.8 L739.4 641.0 L738.8 645.1 L738.2 649.2 L737.6 653.3 L737.0 657.4 L736.4 661.5 L735.7 665.6 L735.1 669.7 L734.5 673.8 L733.9 677.9 L733.2 682.0 L732.6 686.1 M797.2 529.2 L796.2 533.9 L795.3 538.5 L794.3 543.2 L793.4 547.9 L792.4 552.5 L791.4 557.1 L790.4 561.8 L789.4 566.4 L788.4 571.0 L787.3 575.6 L786.3 580.2 L785.2 584.7 L784.1 589.3 M767.3 646.2 L765.9 650.4 L764.4 654.6 L762.9 658.8 L761.3 663.0 L759.8 667.1 L758.2 671.3 L756.6 675.4 L755.1 679.5 L753.4 683.6 L751.8 687.7 L750.2 691.8 L748.6 695.9 L747.0 700.0 M730.3 639.9 L727.1 638.7 L723.8 637.5 L720.6 636.2 L717.4 634.9 L714.2 633.5 L711.5 632.1 L709.8 631.0 L708.2 629.8 M729.7 647.1 L726.6 645.8 L723.5 644.6 L720.4 643.4 L717.3 642.1 L714.3 640.7 L711.7 639.3 L709.9 638.1 L708.2 636.9 M729.1 654.2 L726.2 653.0 L723.2 651.8 L720.2 650.6 L717.3 649.3 L714.4 647.9 L711.9 646.5 L710.0 645.3 L708.2 644.0 M728.6 661.4 L725.7 660.1 L722.9 659.0 L720.1 657.8 L717.3 656.5 L714.5 655.2 L712.0 653.7 L710.1 652.4 L708.2 651.1 M728.0 668.5 L725.3 667.3 L722.6 666.1 L719.9 665.0 L717.2 663.7 L714.6 662.4 L712.2 660.9 L710.2 659.6 L708.2 658.2 M727.4 675.6 L724.8 674.5 L722.3 673.3 L719.7 672.1 L717.2 670.9 L714.7 669.6 L712.4 668.2 L710.3 666.7 L708.2 665.3 M726.8 682.8 L724.4 681.6 L722.0 680.5 L719.6 679.3 L717.2 678.1 L714.8 676.8 L712.6 675.4 L710.4 673.8 L708.2 672.3 M723.8 637.5 L723.6 641.8 L723.5 646.1 L723.3 650.4 L723.1 654.7 L722.9 659.0 L722.7 663.3 L722.5 667.6 L722.3 671.9 L722.2 676.2 L722.0 680.5 M717.4 634.9 L717.3 639.2 L717.3 643.6 L717.3 647.9 L717.3 652.2 L717.3 656.5 L717.3 660.8 L717.2 665.2 L717.2 669.5 L717.2 673.8 L717.2 678.1 M711.5 632.1 L711.6 636.4 L711.7 640.8 L711.8 645.1 L711.9 649.4 L712.0 653.7 L712.2 658.1 L712.3 662.4 L712.4 666.7 L712.5 671.0 L712.6 675.4 M708.2 629.8 L708.2 634.1 L708.2 638.3 L708.2 642.6 L708.2 646.8 L708.2 651.1 L708.2 655.3 L708.2 659.6 L708.2 663.8 L708.2 668.1 L708.2 672.3" stroke="#000" stroke-width="1" fill="none" stroke-linejoin="round"/></g><path d="M708.2 502.4 L709.8 502.9 L711.8 503.5 L714.4 504.3 L717.6 505.3 L721.3 506.3 L725.7 507.5 L730.9 508.8 L736.6 510.3 L742.4 511.8 L748.1 513.3 L753.8 514.9 L759.6 516.5 L765.6 518.1 L771.4 519.9 L777.2 521.7 L782.8 523.6 L788.2 525.7 L793.6 527.8 L799.1 530.0 L804.8 532.2 L810.7 534.5 L816.6 537.0 L822.7 539.5 L829.0 542.0 L835.3 544.5 L841.9 547.0 L848.6 549.5 L855.5 551.9 L862.2 554.4 L868.8 556.9 L875.2 559.3 L881.5 561.7 L887.7 564.1 L893.7 566.6 L899.3 569.2 L904.9 572.3 L910.5 575.7 L915.7 579.2 L920.1 582.1 L923.3 584.2 L1198.3 819.0 L1051.5 982.4 L787.1 747.5 L785.0 745.3 L781.9 742.3 L778.4 738.7 L774.9 735.1 L771.8 731.8 L769.1 728.9 L766.5 726.1 L764.0 723.3 L761.6 720.6 L759.4 717.8 L757.4 715.0 L755.5 712.2 L753.8 709.3 L752.0 706.6 L750.1 703.9 L748.0 701.2 L745.8 698.6 L743.6 696.0 L741.4 693.6 L739.3 691.5 L737.4 689.8 L735.7 688.3 L734.0 687.0 L732.1 685.8 L730.0 684.5 L727.4 683.1 L724.6 681.7 L721.6 680.3 L718.7 678.9 L716.0 677.5 L713.6 676.1 L711.4 674.6 L709.3 673.1 L707.3 671.7 L705.2 670.5 L703.0 669.4 L700.6 668.5 L698.4 667.6 L696.5 666.9 L695.1 666.4" stroke="#000" stroke-width="1.1" fill="none" stroke-linejoin="round"/><path d="M695.1 666.4 L705.0 668.0 L705.3 659.5 L697.5 647.0" stroke="#000" stroke-width="0.9" fill="none"/><polygon points="707.1,518.8 738.4,520.0 729.3,648.3 697.8,646.3" fill="#d3d3d3"/><path d="M707.1 518.8 L697.8 646.3" stroke="#000" stroke-width="1.1" fill="none"/><path d="M705.3 519.5 L696.3 645.5" stroke="#000" stroke-width="0.9" fill="none"/><path d="M707.1 518.8 L738.4 520.0" stroke="#000" stroke-width="1" fill="none" stroke-dasharray="6 3"/><circle cx="721.6" cy="535.9" r="3.6" fill="#fff" stroke="#333" stroke-width="0.7" stroke-dasharray="1.6 1.2"/><circle cx="719.1" cy="567.8" r="3.6" fill="#fff" stroke="#333" stroke-width="0.7" stroke-dasharray="1.6 1.2"/><circle cx="716.2" cy="599.8" r="3.6" fill="#fff" stroke="#333" stroke-width="0.7" stroke-dasharray="1.6 1.2"/><circle cx="713.3" cy="631.8" r="3.6" fill="#fff" stroke="#333" stroke-width="0.7" stroke-dasharray="1.6 1.2"/><circle cx="714.6" cy="630.6" r="1.6" fill="#2050ff"/><circle cx="713" cy="632.3" r="3" fill="#fff"/><path d="M720 535 l1.6 -2.2 l1.8 0.4" stroke="#e6e600" stroke-width="1.2" fill="none"/><rect x="725.5" y="576" width="6.5" height="8" fill="none" stroke="#222" stroke-width="0.8" stroke-dasharray="3 1.5" transform="rotate(-4 728 580)"/><path d="M711 541.5 h4 M707.5 636 q-1 6 1.5 9 M717 638 v6 M710.5 626 q3 -3 6.5 -0.5" stroke="#222" stroke-width="0.8" fill="none" stroke-dasharray="2.5 1.5"/><polygon points="579.3,194.1 720.7,200.7 675.7,964.5 534.1,958.2" fill="#d3d3d3" stroke="#000" stroke-width="1.1"/><path d="M578.2 212.7 L719.6 219.3 M577.1 231.4 L718.5 238.0 M576.0 250.0 L717.4 256.6 M574.9 268.6 L716.3 275.2 M573.8 287.3 L715.2 293.8 M572.7 305.9 L714.1 312.5 M571.6 324.6 L713.0 331.1 M570.5 343.2 L711.9 349.7 M569.4 361.8 L710.8 368.4 M568.3 380.5 L709.7 387.0 M567.2 399.1 L708.6 405.6 M546.2 753.2 L687.8 759.6 M545.1 771.8 L686.7 778.2 M544.0 790.5 L685.6 796.8 M542.9 809.1 L684.5 815.5 M541.8 827.7 L683.4 834.1 M540.7 846.4 L682.3 852.7 M539.6 865.0 L681.2 871.4 M538.5 883.7 L680.1 890.0 M537.4 902.3 L679.0 908.6 M536.3 920.9 L677.9 927.2 M535.2 939.6 L676.8 945.9 M597.0 194.9 L583.8 418.6 M565.0 735.4 L551.8 959.0 M614.6 195.8 L601.4 419.4 M582.7 736.2 L569.5 959.8 M632.3 196.6 L619.1 420.2 M600.4 737.0 L587.2 960.6 M650.0 197.4 L636.8 421.0 M618.1 737.8 L604.9 961.4 M667.7 198.2 L654.5 421.8 M635.8 738.6 L622.6 962.1 M685.4 199.0 L672.2 422.6 M653.5 739.4 L640.3 962.9 M703.0 199.9 L689.8 423.4 M671.2 740.2 L658.0 963.7" stroke="#000" stroke-width="1" fill="none"/><path d="M566.1 417.7 L707.5 424.3 M547.3 734.6 L688.9 740.9 M572.4 418.0 L553.7 734.8 M701.2 424.0 L682.5 740.7" stroke="#000" stroke-width="1" fill="none" stroke-dasharray="7 4"/><path d="M565.0 436.4 L572.2 436.7 M699.2 442.5 L706.4 442.9 M563.9 455.0 L571.1 455.3 M698.1 461.2 L705.3 461.5 M562.8 473.6 L570.0 474.0 M697.0 479.8 L704.2 480.1 M561.7 492.3 L568.9 492.6 M695.9 498.4 L703.1 498.8 M560.6 510.9 L567.8 511.3 M694.8 517.1 L702.0 517.4 M559.5 529.6 L566.7 529.9 M693.7 535.7 L700.9 536.0 M558.4 548.2 L565.6 548.5 M692.6 554.3 L699.8 554.7 M557.3 566.8 L564.5 567.2 M691.5 573.0 L698.7 573.3 M556.1 585.5 L563.4 585.8 M690.4 591.6 L697.7 591.9 M555.0 604.1 L562.3 604.4 M689.3 610.2 L696.6 610.5 M553.9 622.7 L561.2 623.1 M688.2 628.8 L695.5 629.2 M552.8 641.4 L560.1 641.7 M687.1 647.5 L694.4 647.8 M551.7 660.0 L559.0 660.3 M686.0 666.1 L693.3 666.4 M550.6 678.7 L557.9 679.0 M684.9 684.7 L692.2 685.1 M549.5 697.3 L556.8 697.6 M683.8 703.4 L691.1 703.7 M548.4 715.9 L555.7 716.3 M682.7 722.0 L690.0 722.3 M561.7 492.3 L703.1 498.8 M551.8 658.2 L693.4 664.6" stroke="#000" stroke-width="1" fill="none"/></svg><div class="b" style="left:1248px;top:158px;width:672px;height:25px;background:#f07020;"></div>
<div class="b" style="left:1322px;top:162px;width:57px;height:21px;background:#f0f0f0;"></div>
<span class="t" style="left:1266.30px;top:163px;font-size:12px;color:#fff;letter-spacing:-0.278px;">Analysis</span>
<span class="t" style="left:1335.40px;top:163px;font-size:12px;color:#f07020;letter-spacing:-0.52px;">Plates</span>
<span class="t" style="left:1392.50px;top:163px;font-size:12px;color:#fff;letter-spacing:-0.308px;">Bolts</span>
<span class="t" style="left:1444.10px;top:163px;font-size:12px;color:#fff;letter-spacing:-0.294px;">Welds</span>
<span class="t" style="left:1264.40px;top:196px;font-size:13px;color:#f07020;font-weight:700;letter-spacing:0.001px;">Check of members and steel plates for extreme load effect</span>
<div class="b" style="left:1259px;top:218px;width:497px;height:255px;background:#fff;border:1px solid #8c8c8c;"></div>
<div class="b" style="left:1260px;top:219px;width:477px;height:44px;background:#f0f0f0;"></div>
<div class="b" style="left:1260px;top:264px;width:477px;height:28px;background:#ececec;"></div>
<div class="b" style="left:1638px;top:219px;width:49px;height:44px;background:#b5694a;"></div>
<div class="b" style="left:1288px;top:264px;width:1px;height:208px;background:#cdcdcd;"></div>
<div class="b" style="left:1288px;top:219px;width:1px;height:45px;background:#a8a8a8;"></div>
<div class="b" style="left:1318px;top:264px;width:1px;height:208px;background:#cdcdcd;"></div>
<div class="b" style="left:1318px;top:219px;width:1px;height:45px;background:#a8a8a8;"></div>
<div class="b" style="left:1365px;top:264px;width:1px;height:208px;background:#cdcdcd;"></div>
<div class="b" style="left:1365px;top:219px;width:1px;height:45px;background:#a8a8a8;"></div>
<div class="b" style="left:1444px;top:264px;width:1px;height:208px;background:#cdcdcd;"></div>
<div class="b" style="left:1444px;top:219px;width:1px;height:45px;background:#a8a8a8;"></div>
<div class="b" style="left:1490px;top:264px;width:1px;height:208px;background:#cdcdcd;"></div>
<div class="b" style="left:1490px;top:219px;width:1px;height:45px;background:#a8a8a8;"></div>
<div class="b" style="left:1540px;top:264px;width:1px;height:208px;background:#cdcdcd;"></div>
<div class="b" style="left:1540px;top:219px;width:1px;height:45px;background:#a8a8a8;"></div>
<div class="b" style="left:1587px;top:264px;width:1px;height:208px;background:#cdcdcd;"></div>
<div class="b" style="left:1587px;top:219px;width:1px;height:45px;background:#a8a8a8;"></div>
<div class="b" style="left:1637px;top:264px;width:1px;height:208px;background:#cdcdcd;"></div>
<div class="b" style="left:1637px;top:219px;width:1px;height:45px;background:#a8a8a8;"></div>
<div class="b" style="left:1687px;top:264px;width:1px;height:208px;background:#cdcdcd;"></div>
<div class="b" style="left:1687px;top:219px;width:1px;height:45px;background:#a8a8a8;"></div>
<div class="b" style="left:1737px;top:264px;width:1px;height:208px;background:#cdcdcd;"></div>
<div class="b" style="left:1737px;top:219px;width:1px;height:45px;background:#a8a8a8;"></div>
<div class="b" style="left:1260px;top:292px;width:477px;height:1px;background:#cdcdcd;"></div>
<div class="b" style="left:1260px;top:321px;width:477px;height:1px;background:#cdcdcd;"></div>
<div class="b" style="left:1260px;top:350px;width:477px;height:1px;background:#cdcdcd;"></div>
<div class="b" style="left:1260px;top:379px;width:477px;height:1px;background:#cdcdcd;"></div>
<div class="b" style="left:1260px;top:408px;width:477px;height:1px;background:#cdcdcd;"></div>
<div class="b" style="left:1260px;top:437px;width:477px;height:1px;background:#cdcdcd;"></div>
<div class="b" style="left:1260px;top:466px;width:477px;height:1px;background:#cdcdcd;"></div>
<div class="b" style="left:1260px;top:263px;width:477px;height:1px;background:#a8a8a8;"></div>
<div class="b" style="left:1738px;top:219px;width:17px;height:253px;background:#fff;"></div>
<div class="b" style="left:1738px;top:219px;width:17px;height:17px;background:#f0f0f0;"></div>
<div class="b" style="left:1738px;top:455px;width:17px;height:17px;background:#f0f0f0;"></div>
<div class="b" style="left:1738px;top:236px;width:17px;height:120px;background:#c9c9c9;"></div>
<svg style="left:1738px;top:219px" width="17" height="253" viewBox="0 0 17 253"><path d="M5.5 10.5 L9.2 6.8 L12.9 10.5" stroke="#c0c0c0" fill="none" stroke-width="1.1"/><path d="M5.5 241 L9.2 244.7 L12.9 241" stroke="#8a8a8a" fill="none" stroke-width="1.1"/></svg>
<span class="t" style="left:1323.20px;top:232px;font-size:12px;color:#383838;font-weight:700;letter-spacing:-0.307px;">Status</span>
<span class="t" style="left:1370.70px;top:232px;font-size:12px;color:#383838;font-weight:700;letter-spacing:0.232px;">Item</span>
<span class="t" style="left:1448.90px;top:232px;font-size:12px;color:#383838;font-weight:700;letter-spacing:-0.153px;">Grade</span>
<span class="t" style="left:1545.50px;top:232px;font-size:12px;color:#383838;font-weight:700;letter-spacing:-1.076px;">Loads</span>
<span class="t" style="left:1495.70px;top:225px;font-size:12px;color:#383838;font-weight:700;">t</span><span class="t" style="left:1501.50px;top:228px;font-size:9.4px;color:#383838;font-weight:700;">p</span><span class="t" style="left:1495.70px;top:242px;font-size:9.8px;color:#555;letter-spacing:0.778px;">[in]</span>
<span class="t" style="left:1592.40px;top:225px;font-size:12px;color:#383838;font-weight:700;">σ</span><span class="t" style="left:1600.10px;top:230px;font-size:9.4px;color:#383838;font-weight:700;letter-spacing:-1.123px;">Ed</span><span class="t" style="left:1592.40px;top:242px;font-size:9.8px;color:#555;letter-spacing:0.373px;">[ksi]</span>
<span class="t" style="left:1642.60px;top:225px;font-size:12px;color:#f0733a;font-weight:700;">ε</span><span class="t" style="left:1648.80px;top:230px;font-size:9.4px;color:#f0733a;font-weight:700;letter-spacing:-0.44px;">Pl</span><span class="t" style="left:1642.60px;top:242px;font-size:9.8px;color:#f0733a;letter-spacing:0.138px;">[%]</span>
<span class="t" style="left:1692.70px;top:225px;font-size:12px;color:#383838;font-weight:700;">σ</span><span class="t" style="left:1700.40px;top:230px;font-size:9.4px;color:#383838;font-weight:700;letter-spacing:-0.461px;">c,Ed</span><span class="t" style="left:1692.70px;top:242px;font-size:9.8px;color:#555;letter-spacing:0.373px;">[ksi]</span>
<svg style="left:1671.5px;top:237.5px" width="10" height="7" viewBox="0 0 10 7"><path d="M0.6 0.6 H8.8 L4.7 6.4 Z" fill="#fff"/></svg>
<span class="t" style="left:1370.70px;top:269px;font-size:12px;color:#1a1a1a;letter-spacing:-0.485px;">W16x31-w 1</span>
<span class="t" style="left:1448.90px;top:269px;font-size:12px;color:#1a1a1a;letter-spacing:-0.369px;">A992 *</span>
<span class="t" style="left:1495.70px;top:269px;font-size:12px;color:#1a1a1a;letter-spacing:-0.235px;">1/4</span>
<span class="t" style="left:1545.50px;top:269px;font-size:12px;color:#1a1a1a;letter-spacing:-0.925px;">LE-CD1</span>
<span class="t" style="left:1592.40px;top:269px;font-size:12px;color:#1a1a1a;letter-spacing:-1.131px;">73.1</span>
<span class="t" style="left:1642.60px;top:269px;font-size:12px;color:#1a1a1a;letter-spacing:-0.846px;">10.9</span>
<span class="t" style="left:1692.30px;top:269px;font-size:12px;color:#1a1a1a;letter-spacing:-0.795px;">2.7</span>
<span class="t" style="left:1370.70px;top:298px;font-size:12px;color:#1a1a1a;letter-spacing:-0.313px;">W16x31-bfl 1</span>
<span class="t" style="left:1448.90px;top:298px;font-size:12px;color:#1a1a1a;letter-spacing:-0.369px;">A992 *</span>
<span class="t" style="left:1495.70px;top:298px;font-size:12px;color:#1a1a1a;letter-spacing:-0.303px;">7/16</span>
<span class="t" style="left:1545.50px;top:298px;font-size:12px;color:#1a1a1a;letter-spacing:-0.925px;">LE-CD1</span>
<span class="t" style="left:1592.40px;top:298px;font-size:12px;color:#1a1a1a;letter-spacing:-1.131px;">64.3</span>
<span class="t" style="left:1642.60px;top:298px;font-size:12px;color:#1a1a1a;letter-spacing:-0.675px;">5.6</span>
<span class="t" style="left:1692.30px;top:298px;font-size:12px;color:#1a1a1a;letter-spacing:-0.795px;">0.0</span>
<span class="t" style="left:1370.70px;top:327px;font-size:12px;color:#1a1a1a;letter-spacing:-0.223px;">W16x31-tfl 1</span>
<span class="t" style="left:1448.90px;top:327px;font-size:12px;color:#1a1a1a;letter-spacing:-0.369px;">A992 *</span>
<span class="t" style="left:1495.70px;top:327px;font-size:12px;color:#1a1a1a;letter-spacing:-0.303px;">7/16</span>
<span class="t" style="left:1545.50px;top:327px;font-size:12px;color:#1a1a1a;letter-spacing:-0.925px;">LE-CD1</span>
<span class="t" style="left:1592.40px;top:327px;font-size:12px;color:#1a1a1a;letter-spacing:-1.131px;">64.2</span>
<span class="t" style="left:1642.60px;top:327px;font-size:12px;color:#1a1a1a;letter-spacing:-0.675px;">5.5</span>
<span class="t" style="left:1692.30px;top:327px;font-size:12px;color:#1a1a1a;letter-spacing:-0.795px;">0.0</span>
<span class="t" style="left:1370.70px;top:356px;font-size:12px;color:#1a1a1a;letter-spacing:-1.244px;">STIFF1b</span>
<span class="t" style="left:1448.90px;top:356px;font-size:12px;color:#1a1a1a;letter-spacing:-0.584px;">A36</span>
<span class="t" style="left:1495.70px;top:356px;font-size:12px;color:#1a1a1a;letter-spacing:-0.235px;">5/8</span>
<span class="t" style="left:1545.50px;top:356px;font-size:12px;color:#1a1a1a;letter-spacing:-0.925px;">LE-CD1</span>
<span class="t" style="left:1592.40px;top:356px;font-size:12px;color:#1a1a1a;letter-spacing:-1.131px;">32.4</span>
<span class="t" style="left:1642.60px;top:356px;font-size:12px;color:#1a1a1a;letter-spacing:-0.675px;">0.0</span>
<span class="t" style="left:1692.30px;top:356px;font-size:12px;color:#1a1a1a;letter-spacing:-0.795px;">0.0</span>
<span class="t" style="left:1370.70px;top:385px;font-size:12px;color:#1a1a1a;letter-spacing:-1.244px;">STIFF1d</span>
<span class="t" style="left:1448.90px;top:385px;font-size:12px;color:#1a1a1a;letter-spacing:-0.584px;">A36</span>
<span class="t" style="left:1495.70px;top:385px;font-size:12px;color:#1a1a1a;letter-spacing:-0.235px;">5/8</span>
<span class="t" style="left:1545.50px;top:385px;font-size:12px;color:#1a1a1a;letter-spacing:-0.925px;">LE-CD1</span>
<span class="t" style="left:1592.40px;top:385px;font-size:12px;color:#1a1a1a;letter-spacing:-1.131px;">32.4</span>
<span class="t" style="left:1642.60px;top:385px;font-size:12px;color:#1a1a1a;letter-spacing:-0.675px;">0.0</span>
<span class="t" style="left:1692.30px;top:385px;font-size:12px;color:#1a1a1a;letter-spacing:-0.795px;">0.0</span>
<span class="t" style="left:1370.70px;top:414px;font-size:12px;color:#1a1a1a;letter-spacing:-1.244px;">STIFF1a</span>
<span class="t" style="left:1448.90px;top:414px;font-size:12px;color:#1a1a1a;letter-spacing:-0.584px;">A36</span>
<span class="t" style="left:1495.70px;top:414px;font-size:12px;color:#1a1a1a;letter-spacing:-0.235px;">5/8</span>
<span class="t" style="left:1545.50px;top:414px;font-size:12px;color:#1a1a1a;letter-spacing:-0.925px;">LE-CD1</span>
<span class="t" style="left:1592.40px;top:414px;font-size:12px;color:#1a1a1a;letter-spacing:-1.131px;">32.4</span>
<span class="t" style="left:1642.60px;top:414px;font-size:12px;color:#1a1a1a;letter-spacing:-0.675px;">0.0</span>
<span class="t" style="left:1692.30px;top:414px;font-size:12px;color:#1a1a1a;letter-spacing:-0.795px;">0.0</span>
<span class="t" style="left:1370.70px;top:443px;font-size:12px;color:#1a1a1a;letter-spacing:-1.295px;">STIFF1c</span>
<span class="t" style="left:1448.90px;top:443px;font-size:12px;color:#1a1a1a;letter-spacing:-0.584px;">A36</span>
<span class="t" style="left:1495.70px;top:443px;font-size:12px;color:#1a1a1a;letter-spacing:-0.235px;">5/8</span>
<span class="t" style="left:1545.50px;top:443px;font-size:12px;color:#1a1a1a;letter-spacing:-0.925px;">LE-CD1</span>
<span class="t" style="left:1592.40px;top:443px;font-size:12px;color:#1a1a1a;letter-spacing:-1.131px;">32.4</span>
<span class="t" style="left:1642.60px;top:443px;font-size:12px;color:#1a1a1a;letter-spacing:-0.675px;">0.0</span>
<span class="t" style="left:1692.30px;top:443px;font-size:12px;color:#1a1a1a;letter-spacing:-0.795px;">0.0</span>
<svg style="left:0;top:0" width="1920" height="480" viewBox="0 0 1920 480"><rect x="1295.5" y="270.5" width="17" height="17" fill="#fff" stroke="#adadad" stroke-width="1"/><path d="M1299.2 279 H1308.8 M1304 274.2 V283.8" stroke="#222" stroke-width="1.9"/><circle cx="1343" cy="278" r="7.9" fill="#56c44a"/><circle cx="1343" cy="278" r="7.5" fill="none" stroke="#86df74" stroke-width="1"/><path d="M1338.6 278.4 L1341.7 281.6 L1347.5 274.6" stroke="#fff" stroke-width="2.3" fill="none"/><rect x="1295.5" y="299.5" width="17" height="17" fill="#fff" stroke="#adadad" stroke-width="1"/><path d="M1299.2 308 H1308.8 M1304 303.2 V312.8" stroke="#222" stroke-width="1.9"/><circle cx="1343" cy="307" r="7.9" fill="#56c44a"/><circle cx="1343" cy="307" r="7.5" fill="none" stroke="#86df74" stroke-width="1"/><path d="M1338.6 307.4 L1341.7 310.6 L1347.5 303.6" stroke="#fff" stroke-width="2.3" fill="none"/><rect x="1295.5" y="328.5" width="17" height="17" fill="#fff" stroke="#adadad" stroke-width="1"/><path d="M1299.2 337 H1308.8 M1304 332.2 V341.8" stroke="#222" stroke-width="1.9"/><circle cx="1343" cy="336" r="7.9" fill="#56c44a"/><circle cx="1343" cy="336" r="7.5" fill="none" stroke="#86df74" stroke-width="1"/><path d="M1338.6 336.4 L1341.7 339.6 L1347.5 332.6" stroke="#fff" stroke-width="2.3" fill="none"/><rect x="1295.5" y="357.5" width="17" height="17" fill="#fff" stroke="#adadad" stroke-width="1"/><path d="M1299.2 366 H1308.8 M1304 361.2 V370.8" stroke="#222" stroke-width="1.9"/><circle cx="1343" cy="365" r="7.9" fill="#56c44a"/><circle cx="1343" cy="365" r="7.5" fill="none" stroke="#86df74" stroke-width="1"/><path d="M1338.6 365.4 L1341.7 368.6 L1347.5 361.6" stroke="#fff" stroke-width="2.3" fill="none"/><rect x="1295.5" y="386.5" width="17" height="17" fill="#fff" stroke="#adadad" stroke-width="1"/><path d="M1299.2 395 H1308.8 M1304 390.2 V399.8" stroke="#222" stroke-width="1.9"/><circle cx="1343" cy="394" r="7.9" fill="#56c44a"/><circle cx="1343" cy="394" r="7.5" fill="none" stroke="#86df74" stroke-width="1"/><path d="M1338.6 394.4 L1341.7 397.6 L1347.5 390.6" stroke="#fff" stroke-width="2.3" fill="none"/><rect x="1295.5" y="415.5" width="17" height="17" fill="#fff" stroke="#adadad" stroke-width="1"/><path d="M1299.2 424 H1308.8 M1304 419.2 V428.8" stroke="#222" stroke-width="1.9"/><circle cx="1343" cy="423" r="7.9" fill="#56c44a"/><circle cx="1343" cy="423" r="7.5" fill="none" stroke="#86df74" stroke-width="1"/><path d="M1338.6 423.4 L1341.7 426.6 L1347.5 419.6" stroke="#fff" stroke-width="2.3" fill="none"/><rect x="1295.5" y="444.5" width="17" height="17" fill="#fff" stroke="#adadad" stroke-width="1"/><path d="M1299.2 453 H1308.8 M1304 448.2 V457.8" stroke="#222" stroke-width="1.9"/><circle cx="1343" cy="452" r="7.9" fill="#56c44a"/><circle cx="1343" cy="452" r="7.5" fill="none" stroke="#86df74" stroke-width="1"/><path d="M1338.6 452.4 L1341.7 455.6 L1347.5 448.6" stroke="#fff" stroke-width="2.3" fill="none"/><path d="M1271.2 273.4 L1276.4 278 L1271.2 282.6" stroke="#444" stroke-width="1.5" fill="none"/><rect x="1366.5" y="264.6" width="77" height="26.8" fill="none" stroke="#f07a38" stroke-width="1.2"/></svg>
<span class="t" style="left:1264.40px;top:477px;font-size:13px;color:#f07020;font-weight:700;letter-spacing:-0.065px;">Design data</span>
<div class="b" style="left:1259px;top:503px;width:377px;height:133.5px;background:#fff;border:1px solid #8c8c8c;"></div>
<div class="b" style="left:1260px;top:504px;width:375px;height:44px;background:#f0f0f0;"></div>
<div class="b" style="left:1288px;top:549px;width:1px;height:86.5px;background:#cdcdcd;"></div>
<div class="b" style="left:1288px;top:504px;width:1px;height:45px;background:#a8a8a8;"></div>
<div class="b" style="left:1334px;top:549px;width:1px;height:86.5px;background:#cdcdcd;"></div>
<div class="b" style="left:1334px;top:504px;width:1px;height:45px;background:#a8a8a8;"></div>
<div class="b" style="left:1384px;top:549px;width:1px;height:86.5px;background:#cdcdcd;"></div>
<div class="b" style="left:1384px;top:504px;width:1px;height:45px;background:#a8a8a8;"></div>
<div class="b" style="left:1434px;top:549px;width:1px;height:86.5px;background:#cdcdcd;"></div>
<div class="b" style="left:1434px;top:504px;width:1px;height:45px;background:#a8a8a8;"></div>
<div class="b" style="left:1484px;top:549px;width:1px;height:86.5px;background:#cdcdcd;"></div>
<div class="b" style="left:1484px;top:504px;width:1px;height:45px;background:#a8a8a8;"></div>
<div class="b" style="left:1534px;top:549px;width:1px;height:86.5px;background:#cdcdcd;"></div>
<div class="b" style="left:1534px;top:504px;width:1px;height:45px;background:#a8a8a8;"></div>
<div class="b" style="left:1584px;top:549px;width:1px;height:86.5px;background:#cdcdcd;"></div>
<div class="b" style="left:1584px;top:504px;width:1px;height:45px;background:#a8a8a8;"></div>
<div class="b" style="left:1260px;top:577px;width:375px;height:1px;background:#cdcdcd;"></div>
<div class="b" style="left:1260px;top:606px;width:375px;height:1px;background:#cdcdcd;"></div>
<div class="b" style="left:1260px;top:548px;width:375px;height:1px;background:#a8a8a8;"></div>
<span class="t" style="left:1293.10px;top:517px;font-size:12px;color:#383838;font-weight:700;letter-spacing:-0.219px;">Grade</span>
<span class="t" style="left:1339.10px;top:510px;font-size:12px;color:#383838;font-weight:700;">ϕ</span><span class="t" style="left:1339.10px;top:527px;font-size:9.8px;color:#333;font-weight:700;letter-spacing:-0.021px;">[]</span>
<span class="t" style="left:1389.40px;top:510px;font-size:12px;color:#383838;font-weight:700;letter-spacing:-0.896px;">Ry</span><span class="t" style="left:1389.40px;top:527px;font-size:9.8px;color:#333;font-weight:700;letter-spacing:-0.021px;">[]</span>
<span class="t" style="left:1439.40px;top:510px;font-size:12px;color:#383838;font-weight:700;">F</span><span class="t" style="left:1446.40px;top:515px;font-size:9.4px;color:#383838;font-weight:700;">y</span><span class="t" style="left:1439.40px;top:527px;font-size:9.8px;color:#444;letter-spacing:0.373px;">[ksi]</span>
<span class="t" style="left:1489.30px;top:510px;font-size:12px;color:#383838;font-weight:700;">F</span><span class="t" style="left:1496.30px;top:515px;font-size:9.4px;color:#383838;font-weight:700;letter-spacing:-0.094px;">y,FEM</span><span class="t" style="left:1489.30px;top:527px;font-size:9.8px;color:#444;letter-spacing:0.373px;">[ksi]</span>
<span class="t" style="left:1539.20px;top:510px;font-size:12px;color:#383838;font-weight:700;">C</span><span class="t" style="left:1547.40px;top:515px;font-size:9.4px;color:#383838;font-weight:700;letter-spacing:-0.117px;">pr</span><span class="t" style="left:1539.20px;top:527px;font-size:9.8px;color:#444;letter-spacing:0.912px;">[-]</span>
<span class="t" style="left:1589.20px;top:510px;font-size:12px;color:#383838;font-weight:700;">ε</span><span class="t" style="left:1595.20px;top:515px;font-size:9.4px;color:#383838;font-weight:700;letter-spacing:0.381px;">lim</span><span class="t" style="left:1589.20px;top:527px;font-size:9.8px;color:#444;letter-spacing:0.138px;">[%]</span>
<span class="t" style="left:1293.10px;top:554px;font-size:12px;color:#1a1a1a;letter-spacing:-0.609px;">A992</span>
<span class="t" style="left:1339.10px;top:554px;font-size:12px;color:#1a1a1a;letter-spacing:-0.588px;">0.90</span>
<span class="t" style="left:1390.20px;top:554px;font-size:12px;color:#1a1a1a;">-</span>
<span class="t" style="left:1439.40px;top:554px;font-size:12px;color:#1a1a1a;letter-spacing:-0.817px;">50.0</span>
<span class="t" style="left:1489.30px;top:554px;font-size:12px;color:#1a1a1a;letter-spacing:-0.817px;">45.0</span>
<span class="t" style="left:1540.00px;top:554px;font-size:12px;color:#1a1a1a;">-</span>
<span class="t" style="left:1589.20px;top:554px;font-size:12px;color:#1a1a1a;letter-spacing:-0.755px;">5.0</span>
<span class="t" style="left:1293.10px;top:583px;font-size:12px;color:#1a1a1a;letter-spacing:-0.424px;">A992 *</span>
<span class="t" style="left:1339.90px;top:583px;font-size:12px;color:#1a1a1a;">-</span>
<span class="t" style="left:1389.40px;top:583px;font-size:12px;color:#1a1a1a;letter-spacing:-0.788px;">1.10</span>
<span class="t" style="left:1439.40px;top:583px;font-size:12px;color:#1a1a1a;letter-spacing:-0.817px;">50.0</span>
<span class="t" style="left:1489.30px;top:583px;font-size:12px;color:#1a1a1a;letter-spacing:-0.817px;">55.0</span>
<span class="t" style="left:1539.20px;top:583px;font-size:12px;color:#1a1a1a;letter-spacing:-0.788px;">1.15</span>
<span class="t" style="left:1589.20px;top:583px;font-size:12px;color:#1a1a1a;letter-spacing:-0.755px;">5.0</span>
<span class="t" style="left:1293.10px;top:612px;font-size:12px;color:#1a1a1a;letter-spacing:-0.584px;">A36</span>
<span class="t" style="left:1339.10px;top:612px;font-size:12px;color:#1a1a1a;letter-spacing:-0.588px;">0.90</span>
<span class="t" style="left:1390.20px;top:612px;font-size:12px;color:#1a1a1a;">-</span>
<span class="t" style="left:1439.40px;top:612px;font-size:12px;color:#1a1a1a;letter-spacing:-0.817px;">36.0</span>
<span class="t" style="left:1489.30px;top:612px;font-size:12px;color:#1a1a1a;letter-spacing:-0.817px;">32.4</span>
<span class="t" style="left:1540.00px;top:612px;font-size:12px;color:#1a1a1a;">-</span>
<span class="t" style="left:1589.20px;top:612px;font-size:12px;color:#1a1a1a;letter-spacing:-0.755px;">5.0</span>
<div class="b" style="left:1248px;top:648px;width:672px;height:5px;background:#cacaca;"></div>
<div class="b" style="left:1248px;top:647px;width:672px;height:1px;background:#a2a2a2;"></div>
<div class="b" style="left:1248px;top:183px;width:1px;height:465px;background:#a2a2a2;"></div>
<div class="b" style="left:1251px;top:656px;width:24px;height:24px;background:linear-gradient(180deg,#eeeeee,#cdcdcd);border:1px solid #b2b2b2;box-shadow:inset 0 0 0 1px #f4f4f4;"></div>
<svg style="left:1251px;top:656px" width="24" height="24" viewBox="0 0 24 24"><path d="M5.2 8.6 V5.2 H8.6 Z M18.8 8.6 V5.2 H15.4 Z M5.2 15.4 V18.8 H8.6 Z M18.8 15.4 V18.8 H15.4 Z" fill="#555"/><path d="M6 6 L9.2 9.2 M18 6 L14.8 9.2 M6 18 L9.2 14.8 M18 18 L14.8 14.8" stroke="#555" fill="none" stroke-width="1.3"/></svg><svg style="left:0;top:0" width="1920" height="1000" viewBox="0 0 1920 1000"><defs><clipPath id="pclip"><polygon points="1271.2,743.4 1687.5,743.4 1676.8,751.2 1675.0,755.8 1676.4,759.5 1695.6,759.5 1695.6,893.0 1676.4,893.0 1675.0,896.7 1676.8,901.3 1687.5,908.6 1271.2,908.6"/></clipPath></defs><polygon points="1271.2,743.4 1687.5,743.4 1676.8,751.2 1675.0,755.8 1676.4,759.5 1695.6,759.5 1695.6,893.0 1676.4,893.0 1675.0,896.7 1676.8,901.3 1687.5,908.6 1271.2,908.6" fill="#dcdcdc"/><g clip-path="url(#pclip)"><polygon points="1529.5,740.0 1529.5,743.8 1530.8,746.3 1532.6,749.8 1534.7,753.8 1536.8,757.6 1538.9,761.2 1541.0,764.8 1543.4,768.6 1546.0,772.4 1548.9,776.5 1552.1,780.8 1555.5,785.0 1558.9,788.9 1562.5,792.5 1566.2,795.8 1570.0,798.9 1573.7,801.8 1577.3,804.5 1580.8,806.9 1584.5,809.1 1588.4,811.0 1592.8,812.6 1597.6,814.0 1602.4,815.1 1606.8,815.6 1610.7,815.5 1614.4,814.8 1617.9,813.9 1621.5,812.9 1625.2,811.8 1628.9,810.4 1632.6,809.1 1636.3,808.3 1640.0,808.1 1643.7,808.3 1647.3,808.7 1651.0,809.2 1654.8,809.7 1658.6,810.4 1662.3,811.1 1665.7,812.0 1668.8,813.1 1671.7,814.5 1674.4,815.7 1676.8,816.6 1679.0,817.2 1680.9,817.7 1682.6,817.6 1684.2,816.6 1685.6,814.4 1686.9,811.3 1688.0,807.6 1688.8,803.7 1689.2,799.2 1689.2,794.0 1689.2,789.0 1689.7,785.2 1691.0,782.8 1692.7,781.3 1694.4,780.4 1695.6,779.7 1700.0,779.0" fill="#a0a0e8"/><polygon points="1529.5,912.0 1529.5,908.2 1530.8,905.7 1532.6,902.2 1534.7,898.2 1536.8,894.4 1538.9,890.8 1541.0,887.2 1543.4,883.4 1546.0,879.6 1548.9,875.5 1552.1,871.2 1555.5,867.0 1558.9,863.1 1562.5,859.5 1566.2,856.2 1570.0,853.1 1573.7,850.2 1577.3,847.5 1580.8,845.1 1584.5,842.9 1588.4,841.0 1592.8,839.4 1597.6,838.0 1602.4,836.9 1606.8,836.4 1610.7,836.5 1614.4,837.2 1617.9,838.1 1621.5,839.1 1625.2,840.2 1628.9,841.6 1632.6,842.9 1636.3,843.7 1640.0,843.9 1643.7,843.7 1647.3,843.3 1651.0,842.8 1654.8,842.3 1658.6,841.6 1662.3,840.9 1665.7,840.0 1668.8,838.9 1671.7,837.5 1674.4,836.3 1676.8,835.4 1679.0,834.8 1680.9,834.3 1682.6,834.4 1684.2,835.4 1685.6,837.6 1686.9,840.7 1688.0,844.4 1688.8,848.3 1689.2,852.8 1689.2,858.0 1689.2,863.0 1689.7,866.8 1691.0,869.2 1692.7,870.7 1694.4,871.6 1695.6,872.3 1700.0,873.0" fill="#a0a0e8"/><polygon points="1541.4,740.0 1541.4,743.8 1542.5,746.3 1544.1,749.8 1545.9,753.8 1547.9,757.6 1550.0,761.3 1552.2,765.1 1554.6,768.8 1557.1,772.4 1559.7,775.8 1562.4,779.0 1565.2,782.2 1568.1,785.2 1571.1,788.2 1574.3,791.1 1577.6,793.8 1581.0,796.3 1584.6,798.5 1588.3,800.6 1592.1,802.3 1595.8,803.7 1599.5,804.7 1603.2,805.2 1606.8,805.5 1610.5,805.5 1614.2,805.2 1617.8,804.6 1621.5,803.7 1625.2,802.7 1628.9,801.4 1632.7,799.9 1636.4,798.4 1640.0,797.2 1643.4,796.2 1646.8,795.3 1650.0,794.7 1652.9,794.5 1655.5,794.8 1657.7,795.6 1659.9,796.7 1662.1,798.1 1664.5,800.0 1666.9,802.5 1669.3,805.0 1671.3,807.3 1672.9,809.4 1674.3,811.6 1675.5,813.4 1676.8,814.7 1678.2,815.5 1679.7,815.9 1681.1,815.6 1682.3,814.7 1683.4,812.8 1684.4,810.1 1685.3,807.0 1686.0,803.7 1686.3,800.1 1686.4,796.2 1686.5,792.3 1686.9,788.9 1687.8,786.1 1689.0,783.7 1690.3,781.6 1691.5,779.7 1692.7,777.9 1693.8,776.4 1694.9,775.1 1695.6,774.2 1700.0,773.0" fill="#6262ee"/><polygon points="1541.4,912.0 1541.4,908.2 1542.5,905.7 1544.1,902.2 1545.9,898.2 1547.9,894.4 1550.0,890.7 1552.2,886.9 1554.6,883.2 1557.1,879.6 1559.7,876.2 1562.4,873.0 1565.2,869.8 1568.1,866.8 1571.1,863.8 1574.3,860.9 1577.6,858.2 1581.0,855.7 1584.6,853.5 1588.3,851.4 1592.1,849.7 1595.8,848.3 1599.5,847.3 1603.2,846.8 1606.8,846.5 1610.5,846.5 1614.2,846.8 1617.8,847.4 1621.5,848.3 1625.2,849.3 1628.9,850.6 1632.7,852.1 1636.4,853.6 1640.0,854.8 1643.4,855.8 1646.8,856.7 1650.0,857.3 1652.9,857.5 1655.5,857.2 1657.7,856.4 1659.9,855.3 1662.1,853.9 1664.5,852.0 1666.9,849.5 1669.3,847.0 1671.3,844.7 1672.9,842.6 1674.3,840.4 1675.5,838.6 1676.8,837.3 1678.2,836.5 1679.7,836.1 1681.1,836.4 1682.3,837.3 1683.4,839.2 1684.4,841.9 1685.3,845.0 1686.0,848.3 1686.3,851.9 1686.4,855.8 1686.5,859.7 1686.9,863.1 1687.8,865.9 1689.0,868.3 1690.3,870.4 1691.5,872.3 1692.7,874.1 1693.8,875.6 1694.9,876.9 1695.6,877.8 1700.0,879.0" fill="#6262ee"/><polygon points="1549.7,740.0 1549.7,743.8 1550.6,745.5 1551.9,748.0 1553.4,750.9 1555.2,753.9 1557.2,756.9 1559.4,760.2 1561.8,763.5 1564.5,766.8 1567.4,770.1 1570.6,773.4 1573.9,776.6 1577.3,779.7 1580.9,782.8 1584.6,785.8 1588.4,788.5 1592.1,790.8 1595.8,792.6 1599.5,794.0 1603.1,794.9 1606.8,795.4 1610.5,795.3 1614.1,794.8 1617.8,793.8 1621.5,792.6 1625.3,791.1 1629.1,789.2 1632.9,787.2 1636.3,785.2 1639.4,783.3 1642.2,781.4 1644.8,779.6 1647.3,777.9 1649.7,776.5 1652.0,775.4 1654.2,774.1 1656.5,772.4 1658.8,769.8 1661.1,766.7 1663.4,763.7 1665.7,761.3 1668.2,760.1 1670.8,759.6 1673.2,759.1 1675.0,757.6 1676.0,754.5 1676.5,750.5 1676.7,746.5 1676.8,743.8 1677.0,740.0" fill="#3030ff"/><polygon points="1549.7,912.0 1549.7,908.2 1550.6,906.5 1551.9,904.0 1553.4,901.1 1555.2,898.1 1557.2,895.1 1559.4,891.8 1561.8,888.5 1564.5,885.2 1567.4,881.9 1570.6,878.6 1573.9,875.4 1577.3,872.3 1580.9,869.2 1584.6,866.2 1588.4,863.5 1592.1,861.2 1595.8,859.4 1599.5,858.0 1603.1,857.1 1606.8,856.6 1610.5,856.7 1614.1,857.2 1617.8,858.2 1621.5,859.4 1625.3,860.9 1629.1,862.8 1632.9,864.8 1636.3,866.8 1639.4,868.7 1642.2,870.6 1644.8,872.4 1647.3,874.1 1649.7,875.5 1652.0,876.6 1654.2,877.9 1656.5,879.6 1658.8,882.2 1661.1,885.3 1663.4,888.3 1665.7,890.7 1668.2,891.9 1670.8,892.4 1673.2,892.9 1675.0,894.4 1676.0,897.5 1676.5,901.5 1676.7,905.5 1676.8,908.2 1677.0,912.0" fill="#3030ff"/><polygon points="1556.2,740.0 1556.2,743.8 1557.2,745.6 1558.7,748.2 1560.5,751.1 1562.6,753.9 1565.0,756.6 1567.9,759.5 1570.8,762.3 1573.7,765.0 1576.5,767.4 1579.2,769.7 1581.9,771.9 1584.7,774.2 1587.4,776.6 1590.1,779.1 1592.9,781.4 1595.8,783.4 1598.9,785.0 1602.1,786.4 1605.4,787.5 1608.7,788.0 1611.9,788.0 1615.0,787.5 1618.2,786.5 1621.5,785.2 1625.1,783.4 1629.0,781.0 1632.8,778.5 1636.3,776.0 1639.4,773.7 1642.2,771.4 1644.8,769.1 1647.3,766.8 1649.7,764.4 1652.0,762.0 1654.2,759.6 1656.5,757.6 1658.8,755.9 1661.1,754.4 1663.4,753.1 1665.7,752.1 1668.2,751.3 1670.9,750.9 1673.3,750.5 1675.0,750.3 1680.0,740.0" fill="#3088ff"/><polygon points="1556.2,912.0 1556.2,908.2 1557.2,906.4 1558.7,903.8 1560.5,900.9 1562.6,898.1 1565.0,895.4 1567.9,892.5 1570.8,889.7 1573.7,887.0 1576.5,884.6 1579.2,882.3 1581.9,880.1 1584.7,877.8 1587.4,875.4 1590.1,872.9 1592.9,870.6 1595.8,868.6 1598.9,867.0 1602.1,865.6 1605.4,864.5 1608.7,864.0 1611.9,864.0 1615.0,864.5 1618.2,865.5 1621.5,866.8 1625.1,868.6 1629.0,871.0 1632.8,873.5 1636.3,876.0 1639.4,878.3 1642.2,880.6 1644.8,882.9 1647.3,885.2 1649.7,887.6 1652.0,890.0 1654.2,892.4 1656.5,894.4 1658.8,896.1 1661.1,897.6 1663.4,898.9 1665.7,899.9 1668.2,900.7 1670.9,901.1 1673.3,901.5 1675.0,901.7 1680.0,912.0" fill="#3088ff"/><polygon points="1562.6,740.0 1562.6,743.8 1563.8,745.6 1565.6,748.3 1567.7,751.2 1570.0,753.9 1572.5,756.2 1575.3,758.4 1578.2,760.7 1581.0,763.1 1583.7,765.8 1586.3,768.8 1589.1,771.6 1592.1,774.2 1595.6,776.5 1599.3,778.5 1603.2,780.3 1606.8,781.6 1610.2,782.5 1613.4,783.0 1616.5,783.1 1619.7,782.5 1623.0,781.1 1626.3,779.1 1629.5,776.7 1632.6,774.2 1635.5,771.6 1638.3,768.7 1641.0,765.8 1643.6,763.1 1646.0,760.6 1648.4,758.2 1650.6,755.9 1652.9,753.9 1655.3,752.2 1657.9,750.9 1660.2,749.6 1662.1,748.4 1663.5,747.1 1664.5,745.8 1665.2,744.6 1665.7,743.8 1666.0,740.0" fill="#30d0ff"/><polygon points="1562.6,912.0 1562.6,908.2 1563.8,906.4 1565.6,903.7 1567.7,900.8 1570.0,898.1 1572.5,895.8 1575.3,893.6 1578.2,891.3 1581.0,888.9 1583.7,886.2 1586.3,883.2 1589.1,880.4 1592.1,877.8 1595.6,875.5 1599.3,873.5 1603.2,871.7 1606.8,870.4 1610.2,869.5 1613.4,869.0 1616.5,868.9 1619.7,869.5 1623.0,870.9 1626.3,872.9 1629.5,875.3 1632.6,877.8 1635.5,880.4 1638.3,883.3 1641.0,886.2 1643.6,888.9 1646.0,891.4 1648.4,893.8 1650.6,896.1 1652.9,898.1 1655.3,899.8 1657.9,901.1 1660.2,902.4 1662.1,903.6 1663.5,904.9 1664.5,906.2 1665.2,907.4 1665.7,908.2 1666.0,912.0" fill="#30d0ff"/><polygon points="1571.8,740.0 1571.8,743.8 1572.7,745.3 1574.0,747.4 1575.5,749.8 1577.3,752.1 1579.3,754.2 1581.6,756.4 1584.1,758.5 1586.6,760.4 1589.2,762.2 1591.9,763.9 1594.7,765.5 1597.6,766.8 1600.7,767.8 1604.0,768.5 1607.4,769.1 1610.5,769.6 1613.5,770.1 1616.3,770.6 1619.0,770.8 1621.5,770.5 1623.6,769.7 1625.3,768.4 1627.0,766.8 1628.9,765.0 1631.1,762.9 1633.5,760.5 1635.9,758.1 1638.1,755.8 1640.2,753.8 1642.3,751.8 1644.1,750.0 1645.5,748.4 1646.4,746.9 1646.9,745.6 1647.1,744.6 1647.3,743.8 1647.5,740.0" fill="#30f0e4"/><polygon points="1571.8,912.0 1571.8,908.2 1572.7,906.7 1574.0,904.6 1575.5,902.2 1577.3,899.9 1579.3,897.8 1581.6,895.6 1584.1,893.5 1586.6,891.6 1589.2,889.8 1591.9,888.1 1594.7,886.5 1597.6,885.2 1600.7,884.2 1604.0,883.5 1607.4,882.9 1610.5,882.4 1613.5,881.9 1616.3,881.4 1619.0,881.2 1621.5,881.5 1623.6,882.3 1625.3,883.6 1627.0,885.2 1628.9,887.0 1631.1,889.1 1633.5,891.5 1635.9,893.9 1638.1,896.2 1640.2,898.2 1642.3,900.2 1644.1,902.0 1645.5,903.6 1646.4,905.1 1646.9,906.4 1647.1,907.4 1647.3,908.2 1647.5,912.0" fill="#30f0e4"/><polygon points="1583.8,740.0 1583.8,743.8 1584.5,745.0 1585.5,746.7 1586.8,748.6 1588.4,750.3 1590.3,751.8 1592.6,753.3 1595.1,754.7 1597.6,755.8 1600.2,756.6 1603.0,757.2 1605.9,757.6 1608.7,757.6 1611.5,757.3 1614.4,756.8 1617.2,755.9 1619.7,754.9 1621.9,753.5 1624.0,751.8 1625.7,750.0 1627.1,748.4 1628.0,747.0 1628.5,745.7 1628.7,744.6 1628.9,743.8 1629.0,740.0" fill="#30c39b"/><polygon points="1583.8,912.0 1583.8,908.2 1584.5,907.0 1585.5,905.3 1586.8,903.4 1588.4,901.7 1590.3,900.2 1592.6,898.7 1595.1,897.3 1597.6,896.2 1600.2,895.4 1603.0,894.8 1605.9,894.4 1608.7,894.4 1611.5,894.7 1614.4,895.2 1617.2,896.1 1619.7,897.1 1621.9,898.5 1624.0,900.2 1625.7,902.0 1627.1,903.6 1628.0,905.0 1628.5,906.3 1628.7,907.4 1628.9,908.2 1629.0,912.0" fill="#30c39b"/><polygon points="1593.9,740.0 1593.9,743.8 1594.9,744.3 1596.3,745.1 1597.9,745.9 1599.4,746.6 1600.8,747.2 1602.2,747.8 1603.6,748.2 1605.0,748.4 1606.4,748.2 1607.9,747.8 1609.3,747.2 1610.5,746.6 1611.6,745.9 1612.7,745.1 1613.6,744.3 1614.2,743.8 1614.3,740.0" fill="#309a5a"/><polygon points="1593.9,912.0 1593.9,908.2 1594.9,907.7 1596.3,906.9 1597.9,906.1 1599.4,905.4 1600.8,904.8 1602.2,904.2 1603.6,903.8 1605.0,903.6 1606.4,903.8 1607.9,904.2 1609.3,904.8 1610.5,905.4 1611.6,906.1 1612.7,906.9 1613.6,907.7 1614.2,908.2 1614.3,912.0" fill="#309a5a"/><polygon points="1668.0,743.0 1688.0,743.0 1677.0,751.0" fill="#30c39b"/><polygon points="1668.0,909.0 1688.0,909.0 1677.0,901.0" fill="#30c39b"/><polygon points="1673.1,803.7 1665.7,796.3 1663.0,785.2 1665.7,772.4 1673.1,764.1 1695.6,760.4 1695.6,768.7 1686.9,790.8 1682.3,803.7" fill="#3030ff"/><polygon points="1670.3,798.1 1666.7,785.2 1670.3,772.4 1676.8,765.0 1691.5,762.2 1687.8,781.6 1684.2,798.1" fill="#3088ff"/><polygon points="1674.5,790.0 1672.5,781.0 1676.0,770.0 1686.0,764.0 1685.0,780.0 1682.0,790.0" fill="#30d0ff"/><polygon points="1673.0,811.0 1677.0,806.0 1683.0,806.0 1686.0,812.0 1681.0,817.0 1676.0,816.0" fill="#3030ff"/><polygon points="1673.1,848.3 1665.7,855.7 1663.0,866.8 1665.7,879.6 1673.1,887.9 1695.6,891.6 1695.6,883.3 1686.9,861.2 1682.3,848.3" fill="#3030ff"/><polygon points="1670.3,853.9 1666.7,866.8 1670.3,879.6 1676.8,887.0 1691.5,889.8 1687.8,870.4 1684.2,853.9" fill="#3088ff"/><polygon points="1674.5,862.0 1672.5,871.0 1676.0,882.0 1686.0,888.0 1685.0,872.0 1682.0,862.0" fill="#30d0ff"/><polygon points="1673.0,841.0 1677.0,846.0 1683.0,846.0 1686.0,840.0 1681.0,835.0 1676.0,836.0" fill="#3030ff"/><polygon points="1676.5,762.0 1684.0,761.5 1683.0,770.0 1677.5,770.0" fill="#30c39b"/><polygon points="1678.0,762.0 1682.5,762.0 1681.5,771.0 1678.5,771.0" fill="#4aa040"/><polygon points="1677.5,767.0 1682.0,767.0 1680.0,772.5" fill="#f0d020"/><polygon points="1677.5,784.5 1682.0,784.5 1680.0,779.5" fill="#f0b020"/><polygon points="1679.0,768.5 1680.6,768.5 1680.0,772.0" fill="#e03010"/><path d="M1271.5 743.2 L1285.6 757.7 M1271.5 908.5 L1285.6 894.0 M1271.5 764.6 L1285.6 771.6 L1302.1 774.8 L1321.7 778.2 L1340.0 773.7 L1355.7 772.1 M1271.5 785.6 L1285.6 787.3 L1300.7 790.4 L1315.6 793.4 L1326.9 798.1 L1343.5 798.6 L1361.8 798.6 M1271.5 805.6 L1285.6 806.5 L1299.9 808.2 L1313.8 809.6 L1326.4 811.4 L1344.3 811.7 L1362.6 812.2 M1271.5 825.7 L1285.6 825.7 L1299.9 825.7 L1313.8 825.7 L1326.9 826.0 L1345.2 825.3 L1363.5 825.7 M1271.5 846.6 L1285.6 845.2 L1300.7 843.1 L1314.7 841.7 L1326.9 840.1 L1344.3 839.3 L1363.5 839.6 M1271.5 866.6 L1285.6 864.4 L1302.1 860.9 L1316.4 857.9 L1327.8 854.1 L1344.3 852.7 L1362.6 852.7 M1271.5 887.6 L1285.6 881.5 L1304.2 877.6 L1321.7 874.0 L1340.0 878.3 L1355.7 879.7 M1285.6 757.7 L1299.9 758.5 L1317.3 759.4 L1334.7 759.4 L1355.7 758.2 M1330.4 788.2 L1343.5 786.4 L1360.9 785.6 M1330.9 864.0 L1343.5 865.8 L1360.9 866.1 M1285.6 894.0 L1301.6 894.0 L1317.3 892.8 L1334.7 892.8 L1356.0 893.7 M1321.7 778.2 L1330.4 788.2 L1326.9 798.1 L1326.4 811.4 L1326.9 826.0 L1326.9 840.1 L1327.8 854.1 L1330.9 864.0 L1321.7 874.0 M1285.6 757.7 L1285.6 771.6 L1285.6 787.3 L1285.6 806.5 L1285.6 825.7 L1285.9 845.2 L1285.6 864.4 L1285.6 881.5 L1285.6 894.0 M1292.0 743.2 L1299.9 758.5 L1302.1 774.8 L1300.7 790.4 L1299.9 808.2 L1299.9 825.7 L1300.7 843.1 L1302.1 860.9 L1304.2 877.6 L1301.6 894.0 L1292.0 908.5 M1313.0 743.2 L1317.3 759.4 L1321.7 778.2 L1315.6 793.4 L1313.8 809.6 L1313.8 825.7 L1314.7 841.7 L1316.4 857.9 L1321.7 874.0 L1317.3 892.8 L1313.0 908.5 M1334.2 743.2 L1334.7 759.4 L1340.0 773.7 L1343.5 786.4 L1343.5 798.6 L1344.3 811.7 L1345.2 825.3 L1344.3 839.3 L1344.3 852.7 L1343.5 865.8 L1340.0 878.3 L1334.7 892.8 L1334.2 908.5 M1354.8 743.2 L1355.7 758.2 L1357.4 772.1 L1360.9 785.6 L1361.8 798.6 L1362.6 812.2 L1363.5 825.7 L1363.5 839.6 L1362.6 852.7 L1360.9 866.1 L1358.3 879.7 L1356.0 893.7 L1354.8 908.5 M1376.2 743.4 L1376.2 757.2 L1376.2 770.9 L1376.2 784.7 L1376.2 798.5 L1376.2 812.2 L1376.2 826.0 L1376.2 839.8 L1376.2 853.5 L1376.2 867.3 L1376.2 881.1 L1376.2 894.8 L1376.2 908.6 M1396.9 743.4 L1396.9 757.2 L1396.9 770.9 L1396.9 784.7 L1396.9 798.5 L1396.9 812.2 L1396.9 826.0 L1396.9 839.8 L1396.9 853.5 L1396.9 867.3 L1396.9 881.1 L1396.9 894.8 L1396.9 908.6 M1417.6 743.4 L1417.6 757.2 L1417.6 770.9 L1417.6 784.7 L1417.6 798.5 L1417.6 812.2 L1417.6 826.0 L1417.6 839.8 L1417.6 853.5 L1417.6 867.3 L1417.6 881.1 L1417.6 894.8 L1417.6 908.6 M1438.2 743.4 L1438.2 757.2 L1438.2 770.9 L1438.2 784.7 L1438.2 798.5 L1438.2 812.2 L1438.2 826.0 L1438.2 839.8 L1438.2 853.5 L1438.2 867.3 L1438.2 881.1 L1438.2 894.8 L1438.2 908.6 M1458.9 743.4 L1458.9 757.2 L1458.9 770.9 L1458.9 784.7 L1458.9 798.5 L1458.9 812.2 L1458.9 826.0 L1458.9 839.8 L1458.9 853.5 L1458.9 867.3 L1458.9 881.1 L1458.9 894.8 L1458.9 908.6 M1479.6 743.4 L1479.6 757.2 L1479.6 770.9 L1479.6 784.7 L1479.6 798.5 L1479.6 812.2 L1479.6 826.0 L1479.6 839.8 L1479.6 853.5 L1479.6 867.3 L1479.6 881.1 L1479.6 894.8 L1479.6 908.6 M1500.3 743.4 L1500.3 757.2 L1500.3 770.9 L1500.3 784.7 L1500.3 798.5 L1500.3 812.2 L1500.3 826.0 L1500.3 839.8 L1500.3 853.5 L1500.3 867.3 L1500.3 881.1 L1500.3 894.8 L1500.3 908.6 M1521.0 743.4 L1521.0 757.2 L1521.0 770.9 L1521.0 784.7 L1521.0 798.5 L1517.5 812.2 L1515.6 826.0 L1517.5 839.8 L1521.0 853.5 L1521.0 867.3 L1521.0 881.1 L1521.0 894.8 L1521.0 908.6 M1541.6 743.4 L1541.5 788.1 L1542.5 804.1 M1541.5 847.6 L1541.6 881.1 L1541.6 908.6 M1562.3 743.4 L1562.3 757.2 L1562.3 770.9 L1562.3 784.7 L1562.3 798.5 L1563.6 812.2 L1566.8 826.0 L1563.6 839.8 L1562.3 853.5 L1562.3 867.3 L1562.3 881.1 L1562.3 894.8 L1562.3 908.6 M1583.0 743.4 L1583.0 757.2 L1583.0 770.9 L1583.0 784.7 L1583.0 798.5 L1583.0 812.2 L1583.0 826.0 L1583.0 839.8 L1583.0 853.5 L1583.0 867.3 L1583.0 881.1 L1583.0 894.8 L1583.0 908.6 M1603.7 743.4 L1603.7 757.2 L1603.7 770.9 L1603.7 784.7 L1603.7 798.5 L1603.7 812.2 L1603.7 826.0 L1603.7 839.8 L1603.7 853.5 L1603.7 867.3 L1603.7 881.1 L1603.7 894.8 L1603.7 908.6 M1624.4 743.4 L1624.4 757.2 L1624.4 770.9 L1624.4 784.7 L1624.4 798.5 L1624.4 812.2 L1624.4 826.0 L1624.4 839.8 L1624.4 853.5 L1624.4 867.3 L1624.4 881.1 L1624.4 894.8 L1624.4 908.6 M1645.0 743.4 L1645.0 757.2 L1645.0 770.9 L1645.0 784.7 L1645.0 798.5 L1645.0 812.2 L1645.0 826.0 L1645.0 839.8 L1645.0 853.5 L1645.0 867.3 L1645.0 881.1 L1645.0 894.8 L1645.0 908.6 M1355.7 757.2 L1656.4 757.2 M1355.7 770.9 L1656.4 770.9 M1360.9 784.7 L1656.4 784.7 M1361.8 798.5 L1656.4 798.5 M1362.6 812.2 L1500.3 812.2 L1517.5 812.2 L1532.4 816.6 M1552.4 816.6 L1563.6 812.2 L1583.0 812.2 L1656.4 812.2 M1363.5 826.0 L1500.3 826.0 L1515.6 826.0 L1527.1 825.7 M1556.6 825.7 L1566.8 826.0 L1583.0 826.0 L1656.4 826.0 M1363.5 839.8 L1500.3 839.8 L1517.5 839.8 L1532.4 834.3 M1550.6 834.8 L1563.6 839.8 L1583.0 839.8 L1656.4 839.8 M1362.6 853.5 L1656.4 853.5 M1360.9 867.3 L1656.4 867.3 M1355.7 881.1 L1656.4 881.1 M1356.0 894.8 L1656.4 894.8 M1527.1 825.7 L1532.4 816.6 L1542.5 804.1 L1552.4 816.6 L1556.6 825.7 L1550.6 834.8 L1541.5 847.6 L1532.4 834.3 L1527.1 825.7 M1532.4 816.6 L1550.6 834.8 M1552.4 816.6 L1532.4 834.3 M1682.9 777.4 L1687.5 779.3 M1681.0 779.3 L1682.9 783.9 M1678.2 779.3 L1676.3 783.9 M1676.3 777.4 L1671.7 779.3 M1676.3 774.6 L1671.7 772.7 M1678.2 772.7 L1676.3 768.1 M1681.0 772.7 L1682.9 768.1 M1682.9 774.6 L1687.5 772.7 M1687.5 779.3 L1682.9 783.9 L1676.3 783.9 L1671.7 779.3 L1671.7 772.7 L1676.3 768.1 L1682.9 768.1 L1687.5 772.7 L1687.5 779.3 M1682.9 809.7 L1687.5 811.6 M1681.0 811.6 L1682.9 816.2 M1678.2 811.6 L1676.3 816.2 M1676.3 809.7 L1671.7 811.6 M1676.3 806.9 L1671.7 805.0 M1678.2 805.0 L1676.3 800.4 M1681.0 805.0 L1682.9 800.4 M1682.9 806.9 L1687.5 805.0 M1687.5 811.6 L1682.9 816.2 L1676.3 816.2 L1671.7 811.6 L1671.7 805.0 L1676.3 800.4 L1682.9 800.4 L1687.5 805.0 L1687.5 811.6 M1682.9 841.4 L1687.5 843.3 M1681.0 843.3 L1682.9 847.9 M1678.2 843.3 L1676.3 847.9 M1676.3 841.4 L1671.7 843.3 M1676.3 838.6 L1671.7 836.7 M1678.2 836.7 L1676.3 832.1 M1681.0 836.7 L1682.9 832.1 M1682.9 838.6 L1687.5 836.7 M1687.5 843.3 L1682.9 847.9 L1676.3 847.9 L1671.7 843.3 L1671.7 836.7 L1676.3 832.1 L1682.9 832.1 L1687.5 836.7 L1687.5 843.3 M1682.9 873.2 L1687.5 875.1 M1681.0 875.1 L1682.9 879.7 M1678.2 875.1 L1676.3 879.7 M1676.3 873.2 L1671.7 875.1 M1676.3 870.4 L1671.7 868.5 M1678.2 868.5 L1676.3 863.9 M1681.0 868.5 L1682.9 863.9 M1682.9 870.4 L1687.5 868.5 M1687.5 875.1 L1682.9 879.7 L1676.3 879.7 L1671.7 875.1 L1671.7 868.5 L1676.3 863.9 L1682.9 863.9 L1687.5 868.5 L1687.5 875.1 M1656.4 757.2 L1669.5 761.9 M1656.4 770.9 L1669.5 772.2 M1656.4 784.7 L1669.5 782.5 M1656.4 798.5 L1669.5 800.9 M1656.4 812.2 L1669.5 811.2 M1656.4 826.0 L1669.5 829.5 M1656.4 839.8 L1669.5 839.8 M1656.4 853.5 L1669.5 850.1 M1656.4 867.3 L1669.5 868.4 M1656.4 881.1 L1669.5 878.8 M1656.4 894.8 L1669.5 889.1 M1656.4 743.4 L1656.4 908.6 M1669.5 759.5 L1669.5 893.0 M1689.5 759.5 L1689.5 893.0 M1669.5 792.0 L1695.6 792.0 M1669.5 824.0 L1695.6 824.0 M1669.5 856.0 L1695.6 856.0" stroke="#2a2a2a" stroke-width="0.55" stroke-opacity="0.8" fill="none" stroke-linejoin="round"/></g><polygon points="1271.2,743.4 1687.5,743.4 1676.8,751.2 1675.0,755.8 1676.4,759.5 1695.6,759.5 1695.6,893.0 1676.4,893.0 1675.0,896.7 1676.8,901.3 1687.5,908.6 1271.2,908.6" fill="none" stroke="#666" stroke-width="0.9"/><circle cx="1679.6" cy="776" r="3.7" fill="#fff"/><circle cx="1679.6" cy="808.3" r="3.7" fill="#fff"/><circle cx="1679.6" cy="840" r="3.7" fill="#fff"/><circle cx="1679.6" cy="871.8" r="3.7" fill="#fff"/></svg><div class="b" style="left:0;top:1000px;width:1920px;height:32px;background:linear-gradient(180deg,rgb(28,28,28) 0px,rgb(28,28,28) 1px,rgb(39,39,39) 1px,rgb(39,39,39) 2px,rgb(30,30,30) 2px,rgb(30,30,30) 3px,rgb(22,22,22) 3px,rgb(22,22,22) 4px,rgb(33,33,33) 4px,rgb(33,33,33) 5px,rgb(22,22,22) 5px,rgb(22,22,22) 6px,rgb(18,18,18) 6px,rgb(18,18,18) 7px,rgb(32,32,32) 7px,rgb(32,32,32) 8px,rgb(45,45,45) 8px,rgb(45,45,45) 9px,rgb(33,33,33) 9px,rgb(33,33,33) 10px,rgb(25,25,25) 10px,rgb(25,25,25) 11px,rgb(30,30,30) 11px,rgb(30,30,30) 12px,rgb(24,24,24) 12px,rgb(24,24,24) 13px,rgb(19,19,19) 13px,rgb(19,19,19) 14px,rgb(28,28,28) 14px,rgb(28,28,28) 15px,rgb(30,30,30) 15px,rgb(30,30,30) 16px,rgb(29,29,29) 16px,rgb(29,29,29) 17px,rgb(29,29,29) 17px,rgb(29,29,29) 18px,rgb(45,45,45) 18px,rgb(45,45,45) 19px,rgb(38,38,38) 19px,rgb(38,38,38) 20px,rgb(26,26,26) 20px,rgb(26,26,26) 21px,rgb(27,27,27) 21px,rgb(27,27,27) 22px,rgb(35,35,35) 22px,rgb(35,35,35) 23px,rgb(37,37,37) 23px,rgb(37,37,37) 24px,rgb(43,43,43) 24px,rgb(43,43,43) 25px,rgb(21,21,21) 25px,rgb(21,21,21) 26px,rgb(38,38,38) 26px,rgb(38,38,38) 27px,rgb(39,39,39) 27px,rgb(39,39,39) 28px,rgb(19,19,19) 28px,rgb(19,19,19) 29px,rgb(35,35,35) 29px,rgb(35,35,35) 30px,rgb(22,22,22) 30px,rgb(22,22,22) 31px,rgb(42,42,42) 31px,rgb(42,42,42) 32px);"></div>
<div class="b" style="left:608px;top:1020px;width:454px;height:1px;background:linear-gradient(90deg,transparent,rgba(0,0,0,0.32) 30%,rgba(0,0,0,0.32) 70%,transparent);"></div><div class="b" style="left:993px;top:1006px;width:674px;height:1px;background:linear-gradient(90deg,transparent,rgba(255,255,255,0.07) 30%,rgba(255,255,255,0.07) 70%,transparent);"></div><div class="b" style="left:-24px;top:1013px;width:338px;height:1px;background:linear-gradient(90deg,transparent,rgba(255,255,255,0.16) 30%,rgba(255,255,255,0.16) 70%,transparent);"></div><div class="b" style="left:928px;top:1015px;width:392px;height:1px;background:linear-gradient(90deg,transparent,rgba(0,0,0,0.41) 30%,rgba(0,0,0,0.41) 70%,transparent);"></div><div class="b" style="left:1091px;top:1007px;width:528px;height:1px;background:linear-gradient(90deg,transparent,rgba(255,255,255,0.07) 30%,rgba(255,255,255,0.07) 70%,transparent);"></div><div class="b" style="left:1799px;top:1025px;width:350px;height:1px;background:linear-gradient(90deg,transparent,rgba(0,0,0,0.35) 30%,rgba(0,0,0,0.35) 70%,transparent);"></div><div class="b" style="left:658px;top:1008px;width:596px;height:1px;background:linear-gradient(90deg,transparent,rgba(255,255,255,0.10) 30%,rgba(255,255,255,0.10) 70%,transparent);"></div><div class="b" style="left:1471px;top:1019px;width:873px;height:1px;background:linear-gradient(90deg,transparent,rgba(0,0,0,0.35) 30%,rgba(0,0,0,0.35) 70%,transparent);"></div><div class="b" style="left:-1px;top:1012px;width:681px;height:1px;background:linear-gradient(90deg,transparent,rgba(255,255,255,0.07) 30%,rgba(255,255,255,0.07) 70%,transparent);"></div><div class="b" style="left:1193px;top:1013px;width:808px;height:1px;background:linear-gradient(90deg,transparent,rgba(255,255,255,0.16) 30%,rgba(255,255,255,0.16) 70%,transparent);"></div><div class="b" style="left:1691px;top:1029px;width:899px;height:1px;background:linear-gradient(90deg,transparent,rgba(255,255,255,0.16) 30%,rgba(255,255,255,0.16) 70%,transparent);"></div><div class="b" style="left:1231px;top:1015px;width:484px;height:1px;background:linear-gradient(90deg,transparent,rgba(0,0,0,0.35) 30%,rgba(0,0,0,0.35) 70%,transparent);"></div><div class="b" style="left:813px;top:1019px;width:837px;height:1px;background:linear-gradient(90deg,transparent,rgba(255,255,255,0.13) 30%,rgba(255,255,255,0.13) 70%,transparent);"></div><div class="b" style="left:1807px;top:1018px;width:923px;height:1px;background:linear-gradient(90deg,transparent,rgba(0,0,0,0.32) 30%,rgba(0,0,0,0.32) 70%,transparent);"></div><div class="b" style="left:1350px;top:1026px;width:468px;height:1px;background:linear-gradient(90deg,transparent,rgba(0,0,0,0.38) 30%,rgba(0,0,0,0.38) 70%,transparent);"></div><div class="b" style="left:-120px;top:1031px;width:731px;height:1px;background:linear-gradient(90deg,transparent,rgba(255,255,255,0.07) 30%,rgba(255,255,255,0.07) 70%,transparent);"></div><div class="b" style="left:1223px;top:1020px;width:648px;height:1px;background:linear-gradient(90deg,transparent,rgba(255,255,255,0.13) 30%,rgba(255,255,255,0.13) 70%,transparent);"></div><div class="b" style="left:1520px;top:1029px;width:370px;height:1px;background:linear-gradient(90deg,transparent,rgba(255,255,255,0.07) 30%,rgba(255,255,255,0.07) 70%,transparent);"></div><div class="b" style="left:1160px;top:1030px;width:1013px;height:1px;background:linear-gradient(90deg,transparent,rgba(0,0,0,0.32) 30%,rgba(0,0,0,0.32) 70%,transparent);"></div><div class="b" style="left:983px;top:1019px;width:962px;height:1px;background:linear-gradient(90deg,transparent,rgba(0,0,0,0.41) 30%,rgba(0,0,0,0.41) 70%,transparent);"></div><div class="b" style="left:510px;top:1024px;width:984px;height:1px;background:linear-gradient(90deg,transparent,rgba(255,255,255,0.07) 30%,rgba(255,255,255,0.07) 70%,transparent);"></div><div class="b" style="left:1051px;top:1022px;width:472px;height:1px;background:linear-gradient(90deg,transparent,rgba(255,255,255,0.07) 30%,rgba(255,255,255,0.07) 70%,transparent);"></div><div class="b" style="left:388px;top:1013px;width:1086px;height:1px;background:linear-gradient(90deg,transparent,rgba(255,255,255,0.10) 30%,rgba(255,255,255,0.10) 70%,transparent);"></div><div class="b" style="left:1677px;top:1025px;width:700px;height:1px;background:linear-gradient(90deg,transparent,rgba(0,0,0,0.41) 30%,rgba(0,0,0,0.41) 70%,transparent);"></div><div class="b" style="left:925px;top:1028px;width:711px;height:1px;background:linear-gradient(90deg,transparent,rgba(255,255,255,0.13) 30%,rgba(255,255,255,0.13) 70%,transparent);"></div><div class="b" style="left:370px;top:1027px;width:863px;height:1px;background:linear-gradient(90deg,transparent,rgba(255,255,255,0.16) 30%,rgba(255,255,255,0.16) 70%,transparent);"></div><div class="b" style="left:109px;top:1024px;width:536px;height:1px;background:linear-gradient(90deg,transparent,rgba(0,0,0,0.32) 30%,rgba(0,0,0,0.32) 70%,transparent);"></div><div class="b" style="left:277px;top:1014px;width:974px;height:1px;background:linear-gradient(90deg,transparent,rgba(255,255,255,0.07) 30%,rgba(255,255,255,0.07) 70%,transparent);"></div>
<div class="b" style="left:0;top:1000px;width:1920px;height:32px;background:linear-gradient(180deg,rgba(0,0,0,.45),rgba(0,0,0,0) 40%,rgba(0,0,0,.15));"></div>
<span class="t" style="left:23.00px;top:1008px;font-size:12px;color:#8a8a8a;font-weight:700;letter-spacing:-0.423px;">Design code:</span>
<span class="t" style="left:99.00px;top:1008px;font-size:12px;color:#fff;font-weight:700;letter-spacing:-0.249px;">AISC - LRFD (2022)</span>
<span class="t" style="left:224.00px;top:1008px;font-size:12px;color:#8a8a8a;font-weight:700;letter-spacing:-0.866px;">Analysis:</span>
<span class="t" style="left:275.00px;top:1008px;font-size:12px;color:#fff;font-weight:700;letter-spacing:-0.485px;">Capacity design</span>
<span class="t" style="left:380.50px;top:1008px;font-size:12px;color:#8a8a8a;font-weight:700;letter-spacing:-0.455px;">Units:</span>
<span class="t" style="left:420.00px;top:1008px;font-size:12px;color:#fff;font-weight:700;letter-spacing:-0.448px;">in</span>
<span class="t" style="left:1797px;top:1008px;font-size:12px;color:#f07020;">www.<span style="color:#fff">ideastatica</span>.com</span>
</div>
</body></html>
